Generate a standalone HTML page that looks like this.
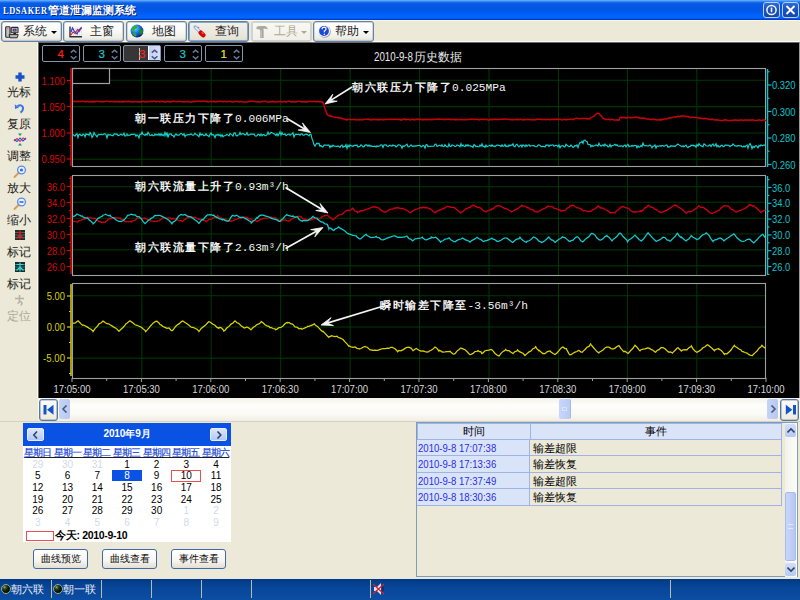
<!DOCTYPE html>
<html><head><meta charset="utf-8">
<style>
*{box-sizing:border-box}
html,body{margin:0;padding:0}
body{width:800px;height:600px;overflow:hidden;position:relative;background:#ece9d8;font-family:"Liberation Sans",sans-serif;font-size:12px;color:#000}
.a{position:absolute}
#title{left:0;top:0;width:800px;height:21px;background:linear-gradient(#6cb0ff 0px,#4c9cff 1px,#1c72f2 2px,#0a5ce4 3.5px,#0558e0 6px,#0058ea 11px,#0062fa 15px,#0068ff 18px,#0044dc 19px,#0034c4 20px,#fff6dc 20px,#fff6dc 21px)}
#title .t{left:3px;top:3px;color:#fff;font:bold 10.5px "Liberation Serif",serif;letter-spacing:-0.9px;text-shadow:1px 1px 0 #0a1f70;white-space:nowrap;line-height:14px}
#title .t .lt{display:inline-block;font-size:11px;letter-spacing:0.8px;transform:scaleX(0.76);transform-origin:0 0;width:44.5px;vertical-align:top}
#title .t .c{font-family:"Liberation Sans",sans-serif;font-size:10.5px;letter-spacing:0}
.tb{border:1px solid #3c6aa8;border-radius:3px;}
.cap{width:17px;height:16px;top:2px;border:1px solid #b8cff4;border-radius:3px;background:linear-gradient(#2d6ad8,#1a52c0 50%,#1446aa)}
.btn{top:20.5px;height:21px;border:1px solid #6582a2;border-radius:3px;box-shadow:inset 0 0 0 0.5px #9fb4cc;background:linear-gradient(#ffffff 0%,#fbfbf9 40%,#eeede6 85%,#dcd8cc 100%);}
.btn .l{position:absolute;top:1.5px;font-size:12px;color:#1a1a1a;white-space:nowrap}
.dd{position:absolute;top:9px;width:0;height:0;border-left:3px solid transparent;border-right:3px solid transparent;border-top:3px solid #000}
.lp{left:0;width:38px;text-align:center;font-size:12px;color:#1a1a1a;white-space:nowrap}
.spin{top:45px;width:38px;height:17px;border:1.5px solid #8494aa;border-radius:2px;background:#000}
.spin .v{position:absolute;right:15px;top:0.5px;font-size:11.5px;line-height:15px;font-weight:normal;-webkit-text-stroke:0.2px currentColor}
.spin svg{position:absolute;left:27px;top:3px}
#chart{left:38px;top:42px;width:762px;height:356px;background:#000;border-left:1px solid #6a6a6a;border-top:1px solid #6a6a6a;border-right:1px solid #9a9a9a}
.cal{left:23px;top:423px;width:208px;height:119px;background:#fff}
.wd{top:445.5px;width:29.7px;text-align:center;font-size:10px;color:#1040d8;-webkit-text-stroke:0.15px #1040d8;text-decoration:underline;white-space:nowrap;letter-spacing:-1px;line-height:13px;text-indent:-1px}
.dt{width:29.7px;text-align:center;font-size:10px;line-height:11px;color:#000}
.g{color:#d2d9e8}
.bb{top:549px;width:55px;height:20px;border:1px solid #3f6aa6;border-radius:3px;background:linear-gradient(#ffffff,#f6f5f0 60%,#e2ded2);font-size:10px;text-align:center;line-height:18px;color:#111}
.tr{left:417px;width:365px;height:16.5px;border-bottom:1px solid #9fb4e4;border-right:1px solid #9fb4e4}
.tc1{position:absolute;left:0;top:0;width:113px;height:100%;background:#d9e4f8;border-right:1px solid #9fb4e4;color:#2a2ee6;font-size:11px;line-height:16px;padding-left:1px;white-space:nowrap}
.tc1 span{display:inline-block;transform:scaleX(0.87);transform-origin:0 0}
.tc2{position:absolute;left:114px;top:0;right:0;height:100%;background:#ece9d8;font-size:11px;line-height:16px;padding-left:2px}
#status{left:0;top:579px;width:800px;height:21px;background:linear-gradient(#003a84,#08469a 40%,#0b4ea2)}
.sep{top:580px;width:1px;height:18px;background:#b8bca8}
.led{top:584px;width:10px;height:10px;border-radius:50%;background:radial-gradient(circle at 32% 28%,#9ab090 0,#2a4a28 22%,#0a1c0a 50%,#040c04 80%);border:1px solid #a8a480}
.ann{color:#f4f4f4;font-size:10.5px;font-weight:bold;letter-spacing:1.5px;line-height:14px;white-space:nowrap;margin-top:-0.5px}
.ann .m{font-family:"Liberation Mono",monospace;font-size:11.2px;letter-spacing:0;font-weight:normal}
.st{top:582px;color:#eef0f6;font-size:11px;white-space:nowrap;letter-spacing:-0.2px}
</style></head><body>

<div id="title" class="a"><div class="a t"><span class="lt">LDSAKER</span><span class="c">管道泄漏监测系统</span></div>
 <div class="a cap" style="left:763px"><svg width="15" height="14" style="position:absolute;left:0;top:0"><circle cx="7.5" cy="7" r="4.6" fill="none" stroke="#f8f4e8" stroke-width="1.5"/><line x1="7.5" y1="4.6" x2="7.5" y2="9.2" stroke="#f8f4e8" stroke-width="1.6"/></svg></div>
 <div class="a cap" style="left:782px"><svg width="15" height="14" style="position:absolute;left:0;top:0"><path d="M3.5 3 L11.5 11 M11.5 3 L3.5 11" stroke="#fff" stroke-width="1.9"/></svg></div>
</div>

<!-- toolbar -->
<div class="a" style="left:0;top:41px;width:800px;height:1px;background:#fbfaf4"></div>
<div class="a btn" style="left:1px;width:61px">
 <svg class="a" style="left:3px;top:4.5px" width="14" height="13"><rect x="0.7" y="0.7" width="4.3" height="10.6" rx="0.8" fill="#c4c4c4" stroke="#2a2a2a" stroke-width="1.1"/><circle cx="2.6" cy="2.6" r="0.9" fill="#f080a0"/><rect x="6.2" y="1.4" width="6.8" height="5.4" rx="0.6" fill="#d4d4d4" stroke="#2a2a2a" stroke-width="1.1"/><rect x="7.6" y="2.6" width="4" height="3" fill="#6a2a9a"/><path d="M8.6 5.6 L9.6 3 L10.6 5.6Z" fill="#20c020"/><rect x="8.4" y="6.8" width="2.6" height="1.5" fill="#222"/><path d="M4 8.6 H13.2 L12.2 11.8 H5Z" fill="#b8b8b8" stroke="#2a2a2a" stroke-width="1"/></svg>
 <span class="l" style="left:21px">系统</span><span class="dd" style="left:49px"></span></div>
<div class="a btn" style="left:63px;width:61px">
 <svg class="a" style="left:4.5px;top:4.5px" width="14" height="12"><rect x="1" y="0.5" width="12" height="10" fill="#f4f4ee"/><path d="M2 3 H13 M2 6 H13 M2 9 H13" stroke="#c8c8c0" stroke-width="0.8" stroke-dasharray="1 1"/><path d="M1 0.5 V10.8 H13" stroke="#303030" stroke-width="1.4" fill="none"/><path d="M2 9 L4 6 L6 7.5 L8.5 3.5 L10.5 5 L12.5 1" stroke="#e02020" fill="none" stroke-width="1.2"/><path d="M2 6 L3.5 2 L5.5 5.5 L8 8 L10 4 L12.5 2" stroke="#2a3ae8" fill="none" stroke-width="1.2"/></svg>
 <span class="l" style="left:26px">主窗</span></div>
<div class="a btn" style="left:126px;width:61px">
 <svg class="a" style="left:3px;top:2.5px" width="14" height="14"><defs><radialGradient id="gl" cx="35%" cy="30%" r="75%"><stop offset="0" stop-color="#60e0ff"/><stop offset="0.5" stop-color="#1a70f0"/><stop offset="1" stop-color="#0a1a80"/></radialGradient></defs><circle cx="7" cy="7" r="6.4" fill="url(#gl)"/><path d="M1.5 5 Q3 1.5 7 1.2 Q8.5 2.5 6.5 4.5 Q4 5.5 3.5 7.5 Q2 7 1.5 5Z" fill="#30b030"/><path d="M2.5 9 Q5 8 6.5 10 Q7 12.5 5 12.8 Q3 11.5 2.5 9Z" fill="#2aa82a"/><path d="M9 6 Q11.5 4.5 13 6.5 Q13.2 9.5 11 11 Q9 9.5 9 6Z" fill="#1c901c"/><path d="M9.5 12.5 Q12 11.5 13 9" stroke="#001040" stroke-width="1" fill="none" opacity="0.6"/></svg>
 <span class="l" style="left:25px">地图</span></div>
<div class="a btn" style="left:188px;width:61px;border-color:#5f82a8;box-shadow:inset 0 0 0 1px #8aa6c6;background:linear-gradient(#f2f0e8,#ebe8de 60%,#e2dfd2)">
 <svg class="a" style="left:4px;top:3.5px" width="13" height="13"><path d="M2.2 2 L7.6 7.4" stroke="#8ab8e8" stroke-width="3.4" stroke-linecap="round"/><path d="M2.4 2.2 L7.4 7.2" stroke="#ffffff" stroke-width="1.2"/><path d="M5 1.8 L6.2 3" stroke="#e04040" stroke-width="1"/><path d="M7.8 7.8 L10.2 10.2" stroke="#d00808" stroke-width="4.6" stroke-linecap="round"/><path d="M8.6 7.2 L10.4 9" stroke="#ff6020" stroke-width="1.2"/></svg>
 <span class="l" style="left:26px">查询</span></div>
<div class="a btn" style="left:251px;width:61px;border-color:#d6d2c4;background:linear-gradient(#f9f8f3,#f1efe6)">
 <svg class="a" style="left:3px;top:3.5px" width="14" height="14"><path d="M1.5 2 Q3 0.8 6 1 H10 Q12.5 1.5 13 4.5 Q11.5 3.5 10 3.8 H8.5 V5 H4.5 V4.2 Q2.5 4.5 1.5 4 Z" fill="#a8a8a4"/><rect x="5.2" y="5" width="3.4" height="8" fill="#a4a4a0"/><path d="M6.2 5.5 V12.5" stroke="#d8d8d4" stroke-width="0.8"/></svg>
 <span class="l" style="left:22px;color:#aca899">工具</span><span class="dd" style="left:49px;border-top-color:#aca899"></span></div>
<div class="a btn" style="left:313px;width:61px">
 <svg class="a" style="left:3px;top:2.5px" width="15" height="15"><circle cx="7.6" cy="7.6" r="6.2" fill="#4a4a4a" opacity="0.55"/><circle cx="7" cy="7" r="6.1" fill="#f0f4ff"/><circle cx="7" cy="7" r="4.9" fill="#1c48d0"/><path d="M5 5.2 Q5.2 3.2 7.2 3.2 Q9.2 3.4 9 5.2 Q8.8 6.4 7.4 7 V8.3" stroke="#e8f0ff" stroke-width="1.3" fill="none"/><circle cx="7.3" cy="10.2" r="0.8" fill="#e8f0ff"/></svg>
 <span class="l" style="left:21px">帮助</span><span class="dd" style="left:49px"></span></div>

<!-- left panel -->
<div class="a" style="left:37px;top:42px;width:1px;height:356px;background:#fbfaf4"></div>
<svg class="a" style="left:14.5px;top:71.5px" width="10" height="10"><path d="M3.3 0.5 H6.7 V3.3 H9.5 V6.7 H6.7 V9.5 H3.3 V6.7 H0.5 V3.3 H3.3Z" fill="#1a50c8"/></svg>
<div class="a lp" style="top:84px">光标</div>
<svg class="a" style="left:14px;top:103px" width="11" height="11"><path d="M3.5 3.2 Q6.5 1 8.6 3.6 Q10.2 6.6 6.5 9.6" fill="none" stroke="#3a74e8" stroke-width="2"/><path d="M0.8 1.2 L5 4.6 L1 6Z" fill="#3a74e8"/></svg>
<div class="a lp" style="top:115.5px">复原</div>
<svg class="a" style="left:12.5px;top:133px" width="14" height="13"><path d="M1 8 L4 5.5 L7 8.5 L10 5 L13 6.5" stroke="#e03838" fill="none" stroke-width="1.1"/><path d="M1 6.5 L4 8.5 L7 5 L10 8 L13 5" stroke="#3050e0" fill="none" stroke-width="1.1"/><path d="M5 0.5 L7 3 L9 0.5Z M5 12.5 L7 10 L9 12.5Z" fill="#109880"/></svg>
<div class="a lp" style="top:148px">调整</div>
<svg class="a" style="left:13px;top:165px" width="14" height="13"><path d="M1.5 12 L5.5 8" stroke="#d8a040" stroke-width="1.8" stroke-linecap="round"/><circle cx="8.5" cy="5" r="3.9" fill="#e8f2ff" stroke="#5a8ae8" stroke-width="1.3"/><circle cx="8.5" cy="5" r="1.6" fill="#3a6ae0"/></svg>
<div class="a lp" style="top:180px">放大</div>
<svg class="a" style="left:13px;top:197px" width="14" height="13"><path d="M1.5 12 L5.5 8" stroke="#d8a040" stroke-width="1.8" stroke-linecap="round"/><circle cx="8.5" cy="5" r="3.9" fill="#e8f2ff" stroke="#5a8ae8" stroke-width="1.3"/><path d="M6.5 5 H10.5" stroke="#3a6ae0" stroke-width="1.6"/></svg>
<div class="a lp" style="top:212px">缩小</div>
<svg class="a" style="left:14.5px;top:230px" width="10" height="10"><rect x="0" y="0" width="10" height="10" fill="#1c2c2c"/><path d="M0 2.5 H10 M0 5 H10 M0 7.5 H10" stroke="#3a8a80" stroke-width="0.8"/><path d="M1.5 2.5 H8.5 M5 0.5 V9.5 M1.5 8.5 L5 5 L8.5 8.5" stroke="#e02020" stroke-width="1.2" fill="none"/></svg>
<div class="a lp" style="top:244px">标记</div>
<svg class="a" style="left:14.5px;top:262px" width="10" height="10"><rect x="0" y="0" width="10" height="10" fill="#1c2c2c"/><path d="M0 2.5 H10 M0 5 H10 M0 7.5 H10" stroke="#3a8a80" stroke-width="0.8"/><path d="M1.5 2.5 H8.5 M5 0.5 V9.5 M1.5 8.5 L5 5 L8.5 8.5" stroke="#30d8e0" stroke-width="1.2" fill="none"/></svg>
<div class="a lp" style="top:276px">标记</div>
<svg class="a" style="left:13px;top:293.5px" width="13" height="13"><path d="M2 4.5 H11 M6.5 1 V7 Q6.5 9 4.5 9.5 M6.5 7 Q8.5 7.5 9 9.5 L8 11.5" stroke="#b4b0a4" stroke-width="1.5" fill="none"/></svg>
<div class="a lp" style="top:308px;color:#aca899">定位</div>

<!-- chart -->
<div id="chart" class="a"></div>
<svg style="position:absolute;left:0;top:0" width="800" height="600" viewBox="0 0 800 600" font-family="Liberation Sans, sans-serif" font-size="11">
<line x1="73" y1="80.3" x2="766" y2="80.3" stroke="#003800" stroke-width="1.05"/>
<line x1="73" y1="106.6" x2="766" y2="106.6" stroke="#003800" stroke-width="1.05"/>
<line x1="73" y1="132.9" x2="766" y2="132.9" stroke="#003800" stroke-width="1.05"/>
<line x1="73" y1="159.2" x2="766" y2="159.2" stroke="#003800" stroke-width="1.05"/>
<line x1="141.8" y1="68" x2="141.8" y2="166" stroke="#003800" stroke-width="1.05"/>
<line x1="211.2" y1="68" x2="211.2" y2="166" stroke="#003800" stroke-width="1.05"/>
<line x1="280.7" y1="68" x2="280.7" y2="166" stroke="#003800" stroke-width="1.05"/>
<line x1="350.1" y1="68" x2="350.1" y2="166" stroke="#003800" stroke-width="1.05"/>
<line x1="419.6" y1="68" x2="419.6" y2="166" stroke="#003800" stroke-width="1.05"/>
<line x1="489.0" y1="68" x2="489.0" y2="166" stroke="#003800" stroke-width="1.05"/>
<line x1="558.5" y1="68" x2="558.5" y2="166" stroke="#003800" stroke-width="1.05"/>
<line x1="627.4" y1="68" x2="627.4" y2="166" stroke="#003800" stroke-width="1.05"/>
<line x1="696.8" y1="68" x2="696.8" y2="166" stroke="#003800" stroke-width="1.05"/>
<rect x="72.5" y="68.5" width="693" height="98" fill="none" stroke="#a0a0a0" stroke-width="1.1"/>
<line x1="73" y1="186.7" x2="766" y2="186.7" stroke="#003800" stroke-width="1.05"/>
<line x1="73" y1="202.3" x2="766" y2="202.3" stroke="#003800" stroke-width="1.05"/>
<line x1="73" y1="218.2" x2="766" y2="218.2" stroke="#003800" stroke-width="1.05"/>
<line x1="73" y1="234" x2="766" y2="234" stroke="#003800" stroke-width="1.05"/>
<line x1="73" y1="249.8" x2="766" y2="249.8" stroke="#003800" stroke-width="1.05"/>
<line x1="73" y1="265.7" x2="766" y2="265.7" stroke="#003800" stroke-width="1.05"/>
<line x1="141.8" y1="175" x2="141.8" y2="275" stroke="#003800" stroke-width="1.05"/>
<line x1="211.2" y1="175" x2="211.2" y2="275" stroke="#003800" stroke-width="1.05"/>
<line x1="280.7" y1="175" x2="280.7" y2="275" stroke="#003800" stroke-width="1.05"/>
<line x1="350.1" y1="175" x2="350.1" y2="275" stroke="#003800" stroke-width="1.05"/>
<line x1="419.6" y1="175" x2="419.6" y2="275" stroke="#003800" stroke-width="1.05"/>
<line x1="489.0" y1="175" x2="489.0" y2="275" stroke="#003800" stroke-width="1.05"/>
<line x1="558.5" y1="175" x2="558.5" y2="275" stroke="#003800" stroke-width="1.05"/>
<line x1="627.4" y1="175" x2="627.4" y2="275" stroke="#003800" stroke-width="1.05"/>
<line x1="696.8" y1="175" x2="696.8" y2="275" stroke="#003800" stroke-width="1.05"/>
<rect x="72.5" y="175.5" width="693" height="100" fill="none" stroke="#a0a0a0" stroke-width="1.1"/>
<line x1="73" y1="295.8" x2="766" y2="295.8" stroke="#003800" stroke-width="1.05"/>
<line x1="73" y1="327" x2="766" y2="327" stroke="#003800" stroke-width="1.05"/>
<line x1="73" y1="358.2" x2="766" y2="358.2" stroke="#003800" stroke-width="1.05"/>
<line x1="141.8" y1="283" x2="141.8" y2="378" stroke="#003800" stroke-width="1.05"/>
<line x1="211.2" y1="283" x2="211.2" y2="378" stroke="#003800" stroke-width="1.05"/>
<line x1="280.7" y1="283" x2="280.7" y2="378" stroke="#003800" stroke-width="1.05"/>
<line x1="350.1" y1="283" x2="350.1" y2="378" stroke="#003800" stroke-width="1.05"/>
<line x1="419.6" y1="283" x2="419.6" y2="378" stroke="#003800" stroke-width="1.05"/>
<line x1="489.0" y1="283" x2="489.0" y2="378" stroke="#003800" stroke-width="1.05"/>
<line x1="558.5" y1="283" x2="558.5" y2="378" stroke="#003800" stroke-width="1.05"/>
<line x1="627.4" y1="283" x2="627.4" y2="378" stroke="#003800" stroke-width="1.05"/>
<line x1="696.8" y1="283" x2="696.8" y2="378" stroke="#003800" stroke-width="1.05"/>
<rect x="72.5" y="283.5" width="693" height="95" fill="none" stroke="#a0a0a0" stroke-width="1.1"/>
<rect x="72.5" y="68.5" width="37" height="15" fill="#000" stroke="#a0a0a0" stroke-width="1.2"/>
<line x1="71" y1="68" x2="71" y2="166" stroke="#d80808" stroke-width="1.5"/>
<line x1="67" y1="80.5" x2="71" y2="80.5" stroke="#d80808" stroke-width="1.2"/>
<text x="41.4" y="84.5" textLength="23.6" lengthAdjust="spacingAndGlyphs" fill="#d80808">1.100</text>
<line x1="67" y1="106.5" x2="71" y2="106.5" stroke="#d80808" stroke-width="1.2"/>
<text x="41.4" y="110.5" textLength="23.6" lengthAdjust="spacingAndGlyphs" fill="#d80808">1.050</text>
<line x1="67" y1="133" x2="71" y2="133" stroke="#d80808" stroke-width="1.2"/>
<text x="41.4" y="137" textLength="23.6" lengthAdjust="spacingAndGlyphs" fill="#d80808">1.000</text>
<line x1="67" y1="159" x2="71" y2="159" stroke="#d80808" stroke-width="1.2"/>
<text x="41.4" y="163" textLength="23.6" lengthAdjust="spacingAndGlyphs" fill="#d80808">0.950</text>
<line x1="69" y1="93.5" x2="71" y2="93.5" stroke="#d80808" stroke-width="1.2"/>
<line x1="69" y1="119.5" x2="71" y2="119.5" stroke="#d80808" stroke-width="1.2"/>
<line x1="69" y1="145.5" x2="71" y2="145.5" stroke="#d80808" stroke-width="1.2"/>
<line x1="767.5" y1="69" x2="767.5" y2="167" stroke="#10c0c8" stroke-width="1.5"/>
<line x1="767.5" y1="85" x2="771.5" y2="85" stroke="#10c0c8" stroke-width="1.2"/>
<text x="772.0" y="89" textLength="23.6" lengthAdjust="spacingAndGlyphs" fill="#10c0c8">0.320</text>
<line x1="767.5" y1="111.5" x2="771.5" y2="111.5" stroke="#10c0c8" stroke-width="1.2"/>
<text x="772.0" y="115.5" textLength="23.6" lengthAdjust="spacingAndGlyphs" fill="#10c0c8">0.300</text>
<line x1="767.5" y1="138" x2="771.5" y2="138" stroke="#10c0c8" stroke-width="1.2"/>
<text x="772.0" y="142" textLength="23.6" lengthAdjust="spacingAndGlyphs" fill="#10c0c8">0.280</text>
<line x1="767.5" y1="164.5" x2="771.5" y2="164.5" stroke="#10c0c8" stroke-width="1.2"/>
<text x="772.0" y="168.5" textLength="23.6" lengthAdjust="spacingAndGlyphs" fill="#10c0c8">0.260</text>
<line x1="767.5" y1="71.75" x2="769.5" y2="71.75" stroke="#10c0c8" stroke-width="1.2"/>
<line x1="767.5" y1="98.25" x2="769.5" y2="98.25" stroke="#10c0c8" stroke-width="1.2"/>
<line x1="767.5" y1="124.75" x2="769.5" y2="124.75" stroke="#10c0c8" stroke-width="1.2"/>
<line x1="767.5" y1="151.25" x2="769.5" y2="151.25" stroke="#10c0c8" stroke-width="1.2"/>
<line x1="71" y1="176" x2="71" y2="274" stroke="#d80808" stroke-width="1.5"/>
<line x1="67" y1="186.5" x2="71" y2="186.5" stroke="#d80808" stroke-width="1.2"/>
<text x="46.75" y="190.5" textLength="18.250000000000004" lengthAdjust="spacingAndGlyphs" fill="#d80808">36.0</text>
<line x1="67" y1="202.5" x2="71" y2="202.5" stroke="#d80808" stroke-width="1.2"/>
<text x="46.75" y="206.5" textLength="18.250000000000004" lengthAdjust="spacingAndGlyphs" fill="#d80808">34.0</text>
<line x1="67" y1="218.5" x2="71" y2="218.5" stroke="#d80808" stroke-width="1.2"/>
<text x="46.75" y="222.5" textLength="18.250000000000004" lengthAdjust="spacingAndGlyphs" fill="#d80808">32.0</text>
<line x1="67" y1="234.5" x2="71" y2="234.5" stroke="#d80808" stroke-width="1.2"/>
<text x="46.75" y="238.5" textLength="18.250000000000004" lengthAdjust="spacingAndGlyphs" fill="#d80808">30.0</text>
<line x1="67" y1="250.5" x2="71" y2="250.5" stroke="#d80808" stroke-width="1.2"/>
<text x="46.75" y="254.5" textLength="18.250000000000004" lengthAdjust="spacingAndGlyphs" fill="#d80808">28.0</text>
<line x1="67" y1="266.5" x2="71" y2="266.5" stroke="#d80808" stroke-width="1.2"/>
<text x="46.75" y="270.5" textLength="18.250000000000004" lengthAdjust="spacingAndGlyphs" fill="#d80808">26.0</text>
<line x1="69" y1="178.5" x2="71" y2="178.5" stroke="#d80808" stroke-width="1.2"/>
<line x1="69" y1="194.5" x2="71" y2="194.5" stroke="#d80808" stroke-width="1.2"/>
<line x1="69" y1="210.5" x2="71" y2="210.5" stroke="#d80808" stroke-width="1.2"/>
<line x1="69" y1="226.5" x2="71" y2="226.5" stroke="#d80808" stroke-width="1.2"/>
<line x1="69" y1="242.5" x2="71" y2="242.5" stroke="#d80808" stroke-width="1.2"/>
<line x1="69" y1="258.5" x2="71" y2="258.5" stroke="#d80808" stroke-width="1.2"/>
<line x1="767.5" y1="176" x2="767.5" y2="275" stroke="#10c0c8" stroke-width="1.5"/>
<line x1="767.5" y1="187.5" x2="771.5" y2="187.5" stroke="#10c0c8" stroke-width="1.2"/>
<text x="772.0" y="191.5" textLength="18.250000000000004" lengthAdjust="spacingAndGlyphs" fill="#10c0c8">36.0</text>
<line x1="767.5" y1="203.3" x2="771.5" y2="203.3" stroke="#10c0c8" stroke-width="1.2"/>
<text x="772.0" y="207.3" textLength="18.250000000000004" lengthAdjust="spacingAndGlyphs" fill="#10c0c8">34.0</text>
<line x1="767.5" y1="219.1" x2="771.5" y2="219.1" stroke="#10c0c8" stroke-width="1.2"/>
<text x="772.0" y="223.1" textLength="18.250000000000004" lengthAdjust="spacingAndGlyphs" fill="#10c0c8">32.0</text>
<line x1="767.5" y1="234.9" x2="771.5" y2="234.9" stroke="#10c0c8" stroke-width="1.2"/>
<text x="772.0" y="238.9" textLength="18.250000000000004" lengthAdjust="spacingAndGlyphs" fill="#10c0c8">30.0</text>
<line x1="767.5" y1="250.7" x2="771.5" y2="250.7" stroke="#10c0c8" stroke-width="1.2"/>
<text x="772.0" y="254.7" textLength="18.250000000000004" lengthAdjust="spacingAndGlyphs" fill="#10c0c8">28.0</text>
<line x1="767.5" y1="266.5" x2="771.5" y2="266.5" stroke="#10c0c8" stroke-width="1.2"/>
<text x="772.0" y="270.5" textLength="18.250000000000004" lengthAdjust="spacingAndGlyphs" fill="#10c0c8">26.0</text>
<line x1="767.5" y1="179.6" x2="769.5" y2="179.6" stroke="#10c0c8" stroke-width="1.2"/>
<line x1="767.5" y1="195.4" x2="769.5" y2="195.4" stroke="#10c0c8" stroke-width="1.2"/>
<line x1="767.5" y1="211.20000000000002" x2="769.5" y2="211.20000000000002" stroke="#10c0c8" stroke-width="1.2"/>
<line x1="767.5" y1="227.00000000000003" x2="769.5" y2="227.00000000000003" stroke="#10c0c8" stroke-width="1.2"/>
<line x1="767.5" y1="242.80000000000004" x2="769.5" y2="242.80000000000004" stroke="#10c0c8" stroke-width="1.2"/>
<line x1="767.5" y1="258.6" x2="769.5" y2="258.6" stroke="#10c0c8" stroke-width="1.2"/>
<line x1="767.5" y1="274.40000000000003" x2="769.5" y2="274.40000000000003" stroke="#10c0c8" stroke-width="1.2"/>
<line x1="71" y1="284" x2="71" y2="376" stroke="#d8d010" stroke-width="1.5"/>
<line x1="67" y1="296" x2="71" y2="296" stroke="#d8d010" stroke-width="1.2"/>
<text x="46.75" y="300" textLength="18.250000000000004" lengthAdjust="spacingAndGlyphs" fill="#d8d010">5.00</text>
<line x1="67" y1="327" x2="71" y2="327" stroke="#d8d010" stroke-width="1.2"/>
<text x="46.75" y="331" textLength="18.250000000000004" lengthAdjust="spacingAndGlyphs" fill="#d8d010">0.00</text>
<line x1="67" y1="358" x2="71" y2="358" stroke="#d8d010" stroke-width="1.2"/>
<text x="43.099999999999994" y="362" textLength="21.900000000000002" lengthAdjust="spacingAndGlyphs" fill="#d8d010">-5.00</text>
<line x1="69" y1="311.5" x2="71" y2="311.5" stroke="#d8d010" stroke-width="1.2"/>
<line x1="69" y1="342.5" x2="71" y2="342.5" stroke="#d8d010" stroke-width="1.2"/>
<line x1="69" y1="373.5" x2="71" y2="373.5" stroke="#d8d010" stroke-width="1.2"/>
<line x1="72.0" y1="378" x2="72.0" y2="382" stroke="#a0a0a0" stroke-width="1"/>
<line x1="106.7" y1="378" x2="106.7" y2="381" stroke="#a0a0a0" stroke-width="1"/>
<text x="53.5" y="393" textLength="37" lengthAdjust="spacingAndGlyphs" fill="#d8d8d8">17:05:00</text>
<line x1="141.4" y1="378" x2="141.4" y2="382" stroke="#a0a0a0" stroke-width="1"/>
<line x1="176.1" y1="378" x2="176.1" y2="381" stroke="#a0a0a0" stroke-width="1"/>
<text x="122.9" y="393" textLength="37" lengthAdjust="spacingAndGlyphs" fill="#d8d8d8">17:05:30</text>
<line x1="210.8" y1="378" x2="210.8" y2="382" stroke="#a0a0a0" stroke-width="1"/>
<line x1="245.5" y1="378" x2="245.5" y2="381" stroke="#a0a0a0" stroke-width="1"/>
<text x="192.3" y="393" textLength="37" lengthAdjust="spacingAndGlyphs" fill="#d8d8d8">17:06:00</text>
<line x1="280.2" y1="378" x2="280.2" y2="382" stroke="#a0a0a0" stroke-width="1"/>
<line x1="314.9" y1="378" x2="314.9" y2="381" stroke="#a0a0a0" stroke-width="1"/>
<text x="261.7" y="393" textLength="37" lengthAdjust="spacingAndGlyphs" fill="#d8d8d8">17:06:30</text>
<line x1="349.6" y1="378" x2="349.6" y2="382" stroke="#a0a0a0" stroke-width="1"/>
<line x1="384.3" y1="378" x2="384.3" y2="381" stroke="#a0a0a0" stroke-width="1"/>
<text x="331.1" y="393" textLength="37" lengthAdjust="spacingAndGlyphs" fill="#d8d8d8">17:07:00</text>
<line x1="419.0" y1="378" x2="419.0" y2="382" stroke="#a0a0a0" stroke-width="1"/>
<line x1="453.7" y1="378" x2="453.7" y2="381" stroke="#a0a0a0" stroke-width="1"/>
<text x="400.5" y="393" textLength="37" lengthAdjust="spacingAndGlyphs" fill="#d8d8d8">17:07:30</text>
<line x1="488.4" y1="378" x2="488.4" y2="382" stroke="#a0a0a0" stroke-width="1"/>
<line x1="523.1" y1="378" x2="523.1" y2="381" stroke="#a0a0a0" stroke-width="1"/>
<text x="469.9" y="393" textLength="37" lengthAdjust="spacingAndGlyphs" fill="#d8d8d8">17:08:00</text>
<line x1="557.8" y1="378" x2="557.8" y2="382" stroke="#a0a0a0" stroke-width="1"/>
<line x1="592.5" y1="378" x2="592.5" y2="381" stroke="#a0a0a0" stroke-width="1"/>
<text x="539.3" y="393" textLength="37" lengthAdjust="spacingAndGlyphs" fill="#d8d8d8">17:08:30</text>
<line x1="627.2" y1="378" x2="627.2" y2="382" stroke="#a0a0a0" stroke-width="1"/>
<line x1="661.9" y1="378" x2="661.9" y2="381" stroke="#a0a0a0" stroke-width="1"/>
<text x="608.7" y="393" textLength="37" lengthAdjust="spacingAndGlyphs" fill="#d8d8d8">17:09:00</text>
<line x1="696.6" y1="378" x2="696.6" y2="382" stroke="#a0a0a0" stroke-width="1"/>
<line x1="731.3" y1="378" x2="731.3" y2="381" stroke="#a0a0a0" stroke-width="1"/>
<text x="678.1" y="393" textLength="37" lengthAdjust="spacingAndGlyphs" fill="#d8d8d8">17:09:30</text>
<line x1="766.0" y1="378" x2="766.0" y2="382" stroke="#a0a0a0" stroke-width="1"/>
<text x="747.5" y="393" textLength="37" lengthAdjust="spacingAndGlyphs" fill="#d8d8d8">17:10:00</text>
<polyline points="73.0,101.4 74.0,101.3 75.0,101.7 76.0,101.2 77.0,101.6 78.0,101.5 79.0,101.2 80.0,101.6 81.0,101.2 82.0,101.5 83.0,101.2 84.0,101.2 85.0,101.5 86.0,101.9 87.0,101.3 88.0,101.4 89.0,101.7 90.0,102.0 91.0,101.7 92.0,101.5 93.0,102.0 94.0,101.2 95.0,101.9 96.0,101.4 97.0,101.3 98.0,101.3 99.0,101.4 100.0,101.9 101.0,101.3 102.0,101.7 103.0,101.7 104.0,101.5 105.0,101.6 106.0,101.2 107.0,101.2 108.0,101.3 109.0,101.8 110.0,101.5 111.0,101.4 112.0,101.7 113.0,101.6 114.0,101.4 115.0,101.9 116.0,101.8 117.0,101.4 118.0,101.7 119.0,101.6 120.0,101.9 121.0,101.8 122.0,101.4 123.0,102.0 124.0,101.3 125.0,101.5 126.0,101.8 127.0,101.3 128.0,101.6 129.0,101.2 130.0,101.8 131.0,101.8 132.0,101.7 133.0,101.9 134.0,101.4 135.0,101.8 136.0,101.7 137.0,101.7 138.0,101.6 139.0,101.9 140.0,102.0 141.0,101.6 142.0,101.7 143.0,101.2 144.0,101.8 145.0,101.7 146.0,102.0 147.0,101.9 148.0,101.4 149.0,101.5 150.0,101.8 151.0,101.2 152.0,101.6 153.0,101.3 154.0,101.3 155.0,101.2 156.0,101.8 157.0,101.3 158.0,101.4 159.0,101.5 160.0,101.9 161.0,101.2 162.0,101.6 163.0,101.6 164.0,101.9 165.0,101.9 166.0,101.9 167.0,101.4 168.0,101.5 169.0,101.5 170.0,101.9 171.0,102.0 172.0,101.3 173.0,101.3 174.0,101.4 175.0,101.4 176.0,101.6 177.0,101.7 178.0,101.4 179.0,101.2 180.0,101.5 181.0,101.5 182.0,101.7 183.0,102.0 184.0,101.8 185.0,101.6 186.0,101.7 187.0,101.8 188.0,101.2 189.0,102.0 190.0,101.9 191.0,101.9 192.0,101.9 193.0,101.5 194.0,101.5 195.0,101.2 196.0,101.7 197.0,101.2 198.0,101.2 199.0,101.3 200.0,101.3 201.0,101.5 202.0,101.2 203.0,101.2 204.0,101.3 205.0,101.2 206.0,101.5 207.0,101.2 208.0,101.9 209.0,101.7 210.0,101.3 211.0,101.4 212.0,101.5 213.0,101.5 214.0,101.3 215.0,101.9 216.0,102.0 217.0,101.6 218.0,101.6 219.0,101.2 220.0,101.2 221.0,101.5 222.0,101.4 223.0,101.9 224.0,101.3 225.0,101.2 226.0,102.0 227.0,101.6 228.0,101.3 229.0,101.6 230.0,101.2 231.0,101.6 232.0,102.0 233.0,101.9 234.0,101.8 235.0,101.4 236.0,101.5 237.0,101.3 238.0,101.8 239.0,101.6 240.0,101.9 241.0,101.4 242.0,101.4 243.0,101.9 244.0,102.0 245.0,101.9 246.0,101.9 247.0,101.9 248.0,101.8 249.0,101.4 250.0,101.6 251.0,101.5 252.0,101.2 253.0,101.2 254.0,101.4 255.0,101.4 256.0,101.8 257.0,102.0 258.0,101.6 259.0,102.0 260.0,102.0 261.0,102.0 262.0,101.5 263.0,101.3 264.0,101.4 265.0,101.3 266.0,101.3 267.0,101.7 268.0,102.0 269.0,101.9 270.0,101.6 271.0,101.7 272.0,101.9 273.0,101.2 274.0,101.7 275.0,102.0 276.0,101.9 277.0,101.8 278.0,101.6 279.0,101.3 280.0,101.9 281.0,101.4 282.0,101.9 283.0,102.0 284.0,101.5 285.0,101.5 286.0,102.0 287.0,101.8 288.0,101.3 289.0,101.3 290.0,101.3 291.0,102.0 292.0,101.9 293.0,101.3 294.0,101.9 295.0,102.0 296.0,101.7 297.0,101.5 298.0,101.6 299.0,101.3 300.0,101.2 301.0,102.0 302.0,101.7 303.0,101.6 304.0,102.0 305.0,101.5 306.0,101.9 307.0,101.9 308.0,101.3 309.0,101.4 310.0,101.4 311.0,101.4 312.0,101.7 313.0,101.4 314.0,101.5 315.0,101.3 316.0,102.0 317.0,101.5 318.0,101.6 319.0,101.7 320.0,102.0 321.0,101.5 322.0,102.0 323.0,102.5 324.0,105.0 325.0,108.4 326.0,111.3 327.0,114.1 328.0,115.3 329.0,115.4 330.0,116.3 331.0,115.9 332.0,116.4 333.0,116.8 334.0,116.9 335.0,116.9 336.0,117.3 337.0,117.5 338.0,117.9 339.0,117.5 340.0,118.1 341.0,118.1 342.0,118.3 343.0,118.9 344.0,118.9 345.0,119.6 346.0,119.7 347.0,119.9 348.0,119.4 349.0,119.6 350.0,119.5 351.0,119.5 352.0,119.7 353.0,119.5 354.0,119.5 355.0,119.5 356.0,119.9 357.0,119.7 358.0,119.8 359.0,119.9 360.0,119.3 361.0,119.6 362.0,119.9 363.0,119.8 364.0,119.2 365.0,119.2 366.0,119.4 367.0,119.1 368.0,119.3 369.0,119.1 370.0,119.7 371.0,119.8 372.0,119.9 373.0,119.2 374.0,119.7 375.0,119.6 376.0,119.2 377.0,119.8 378.0,119.9 379.0,119.2 380.0,119.9 381.0,119.4 382.0,119.5 383.0,119.9 384.0,119.8 385.0,119.2 386.0,119.4 387.0,119.5 388.0,119.4 389.0,119.2 390.0,119.3 391.0,119.7 392.0,119.1 393.0,119.5 394.0,119.4 395.0,119.1 396.0,119.3 397.0,119.6 398.0,119.5 399.0,119.1 400.0,119.9 401.0,119.8 402.0,119.9 403.0,119.1 404.0,119.3 405.0,119.1 406.0,119.8 407.0,119.3 408.0,119.2 409.0,119.4 410.0,119.9 411.0,119.8 412.0,119.3 413.0,119.2 414.0,119.9 415.0,119.6 416.0,119.7 417.0,119.1 418.0,119.1 419.0,119.7 420.0,119.4 421.0,119.1 422.0,119.9 423.0,119.6 424.0,119.8 425.0,119.1 426.0,119.8 427.0,119.1 428.0,119.8 429.0,119.5 430.0,119.4 431.0,119.5 432.0,119.9 433.0,119.3 434.0,119.2 435.0,119.5 436.0,119.3 437.0,119.1 438.0,119.2 439.0,119.1 440.0,119.2 441.0,119.3 442.0,119.3 443.0,119.7 444.0,119.3 445.0,119.5 446.0,119.2 447.0,119.4 448.0,119.1 449.0,119.3 450.0,119.1 451.0,119.7 452.0,119.5 453.0,119.2 454.0,119.5 455.0,119.9 456.0,119.1 457.0,119.8 458.0,119.4 459.0,119.5 460.0,119.8 461.0,119.4 462.0,119.5 463.0,119.7 464.0,119.9 465.0,119.4 466.0,119.8 467.0,119.7 468.0,119.6 469.0,119.4 470.0,119.4 471.0,119.1 472.0,119.2 473.0,119.1 474.0,119.7 475.0,119.3 476.0,119.2 477.0,119.1 478.0,119.8 479.0,119.8 480.0,119.7 481.0,119.3 482.0,119.3 483.0,119.3 484.0,119.5 485.0,119.2 486.0,119.5 487.0,119.3 488.0,119.9 489.0,119.9 490.0,119.5 491.0,119.3 492.0,119.9 493.0,119.3 494.0,119.4 495.0,119.1 496.0,119.4 497.0,119.5 498.0,119.5 499.0,119.2 500.0,119.5 501.0,119.1 502.0,119.3 503.0,119.1 504.0,119.4 505.0,119.1 506.0,119.1 507.0,119.3 508.0,119.3 509.0,119.6 510.0,119.5 511.0,119.7 512.0,119.6 513.0,119.7 514.0,119.8 515.0,119.4 516.0,119.3 517.0,119.9 518.0,119.2 519.0,119.7 520.0,119.6 521.0,119.1 522.0,119.8 523.0,119.9 524.0,119.6 525.0,119.7 526.0,119.8 527.0,119.2 528.0,119.5 529.0,119.5 530.0,119.8 531.0,119.8 532.0,119.8 533.0,119.6 534.0,119.9 535.0,119.7 536.0,119.7 537.0,119.3 538.0,119.1 539.0,119.2 540.0,119.4 541.0,119.1 542.0,119.8 543.0,119.6 544.0,119.6 545.0,119.6 546.0,119.7 547.0,119.5 548.0,119.1 549.0,119.8 550.0,119.7 551.0,119.5 552.0,119.5 553.0,119.6 554.0,119.1 555.0,119.7 556.0,119.3 557.0,119.1 558.0,119.3 559.0,119.7 560.0,119.2 561.0,119.7 562.0,119.9 563.0,119.5 564.0,119.4 565.0,119.5 566.0,119.7 567.0,119.7 568.0,119.6 569.0,119.6 570.0,119.1 571.0,119.2 572.0,119.3 573.0,119.7 574.0,119.3 575.0,118.7 576.0,118.2 577.0,118.2 578.0,118.4 579.0,118.8 580.0,118.8 581.0,118.8 582.0,118.4 583.0,118.6 584.0,118.6 585.0,118.6 586.0,118.3 587.0,119.0 588.0,118.3 589.0,119.0 590.0,119.0 591.0,117.4 592.0,117.1 593.0,116.7 594.0,116.1 595.0,114.9 596.0,114.0 597.0,113.3 598.0,113.2 599.0,113.6 600.0,114.9 601.0,115.6 602.0,117.0 603.0,118.4 604.0,118.7 605.0,119.4 606.0,119.2 607.0,119.6 608.0,119.6 609.0,119.2 610.0,119.9 611.0,119.6 612.0,119.3 613.0,119.4 614.0,119.9 615.0,120.0 616.0,119.9 617.0,119.9 618.0,120.2 619.0,120.2 620.0,117.8 621.0,117.1 622.0,117.7 623.0,117.8 624.0,117.2 625.0,117.9 626.0,117.7 627.0,117.9 628.0,117.3 629.0,117.4 630.0,117.4 631.0,117.9 632.0,117.6 633.0,117.4 634.0,117.4 635.0,117.3 636.0,117.1 637.0,117.1 638.0,117.8 639.0,117.3 640.0,118.4 641.0,117.9 642.0,118.0 643.0,118.3 644.0,118.1 645.0,118.4 646.0,119.0 647.0,119.0 648.0,119.1 649.0,119.0 650.0,119.4 651.0,119.5 652.0,119.2 653.0,119.5 654.0,119.0 655.0,119.7 656.0,119.6 657.0,119.9 658.0,119.9 659.0,119.7 660.0,119.6 661.0,120.2 662.0,119.3 663.0,119.4 664.0,119.1 665.0,118.8 666.0,119.0 667.0,119.0 668.0,118.2 669.0,118.3 670.0,117.8 671.0,117.9 672.0,117.5 673.0,117.1 674.0,116.9 675.0,116.7 676.0,117.2 677.0,116.6 678.0,116.1 679.0,116.6 680.0,116.4 681.0,116.1 682.0,115.9 683.0,116.0 684.0,116.1 685.0,116.4 686.0,116.3 687.0,116.5 688.0,116.6 689.0,117.0 690.0,117.4 691.0,117.4 692.0,117.2 693.0,117.3 694.0,117.5 695.0,117.5 696.0,117.6 697.0,117.4 698.0,117.7 699.0,118.5 700.0,117.8 701.0,118.3 702.0,118.5 703.0,118.8 704.0,118.3 705.0,118.5 706.0,118.6 707.0,118.8 708.0,119.0 709.0,119.5 710.0,119.6 711.0,119.7 712.0,119.0 713.0,119.1 714.0,119.9 715.0,120.1 716.0,119.9 717.0,120.3 718.0,119.8 719.0,120.1 720.0,120.6 721.0,120.5 722.0,120.5 723.0,120.6 724.0,120.0 725.0,119.8 726.0,119.9 727.0,120.2 728.0,120.4 729.0,120.6 730.0,120.4 731.0,120.3 732.0,120.4 733.0,120.2 734.0,120.2 735.0,119.8 736.0,120.5 737.0,120.0 738.0,120.6 739.0,120.3 740.0,120.0 741.0,119.9 742.0,120.0 743.0,120.3 744.0,120.4 745.0,119.9 746.0,119.8 747.0,120.2 748.0,120.3 749.0,120.1 750.0,120.0 751.0,120.3 752.0,119.8 753.0,120.0 754.0,120.2 755.0,120.6 756.0,120.3 757.0,120.5 758.0,120.2 759.0,120.0 760.0,120.0 761.0,120.6 762.0,120.4 763.0,120.0 764.0,119.8 765.0,120.2 766.0,120.4" fill="none" stroke="#c8000e" stroke-width="1.5"/>
<polyline points="73.0,134.6 74.0,135.2 75.0,136.1 76.0,134.5 77.0,133.7 78.0,137.7 79.0,134.4 80.0,134.2 81.0,135.4 82.0,135.8 83.0,134.1 84.0,134.6 85.0,136.9 86.0,133.8 87.0,134.6 88.0,134.1 89.0,135.3 90.0,132.5 91.0,134.1 92.0,137.4 93.0,135.9 94.0,132.5 95.0,134.3 96.0,135.4 97.0,136.8 98.0,134.9 99.0,134.4 100.0,134.7 101.0,134.2 102.0,134.6 103.0,134.7 104.0,133.8 105.0,133.8 106.0,134.5 107.0,137.9 108.0,134.4 109.0,135.0 110.0,134.6 111.0,135.3 112.0,135.4 113.0,135.7 114.0,134.0 115.0,133.7 116.0,134.4 117.0,134.0 118.0,135.6 119.0,135.4 120.0,134.8 121.0,134.1 122.0,135.1 123.0,134.9 124.0,133.2 125.0,136.1 126.0,135.8 127.0,134.0 128.0,135.7 129.0,134.9 130.0,135.4 131.0,134.3 132.0,134.3 133.0,134.3 134.0,134.1 135.0,134.3 136.0,136.3 137.0,134.8 138.0,135.5 139.0,138.0 140.0,134.2 141.0,134.5 142.0,132.1 143.0,134.5 144.0,134.7 145.0,135.4 146.0,133.9 147.0,135.1 148.0,132.3 149.0,133.8 150.0,135.7 151.0,135.5 152.0,134.5 153.0,135.6 154.0,135.7 155.0,134.0 156.0,135.1 157.0,134.3 158.0,135.2 159.0,133.8 160.0,135.6 161.0,133.7 162.0,135.5 163.0,134.6 164.0,135.8 165.0,132.5 166.0,135.6 167.0,132.3 168.0,137.6 169.0,134.1 170.0,134.1 171.0,133.8 172.0,135.4 173.0,135.5 174.0,137.0 175.0,135.0 176.0,133.9 177.0,135.2 178.0,135.1 179.0,135.1 180.0,134.1 181.0,133.4 182.0,134.0 183.0,135.3 184.0,133.8 185.0,136.6 186.0,135.0 187.0,135.1 188.0,134.6 189.0,134.6 190.0,134.7 191.0,133.8 192.0,134.8 193.0,135.4 194.0,134.7 195.0,133.2 196.0,134.5 197.0,134.8 198.0,135.7 199.0,136.6 200.0,133.2 201.0,135.3 202.0,134.1 203.0,134.8 204.0,135.7 205.0,135.4 206.0,133.8 207.0,135.4 208.0,135.7 209.0,136.8 210.0,134.3 211.0,132.9 212.0,135.1 213.0,134.4 214.0,135.4 215.0,137.6 216.0,134.7 217.0,135.2 218.0,134.3 219.0,135.6 220.0,134.5 221.0,136.5 222.0,134.7 223.0,136.8 224.0,135.8 225.0,135.7 226.0,135.3 227.0,134.2 228.0,135.1 229.0,135.9 230.0,133.4 231.0,134.4 232.0,134.9 233.0,136.1 234.0,132.9 235.0,132.6 236.0,135.4 237.0,136.0 238.0,135.0 239.0,134.8 240.0,132.4 241.0,134.6 242.0,133.8 243.0,133.7 244.0,134.1 245.0,135.1 246.0,134.6 247.0,132.6 248.0,135.3 249.0,134.9 250.0,134.7 251.0,133.9 252.0,134.1 253.0,134.3 254.0,134.0 255.0,135.7 256.0,136.1 257.0,135.7 258.0,134.4 259.0,134.4 260.0,135.7 261.0,134.1 262.0,135.7 263.0,134.6 264.0,134.5 265.0,135.7 266.0,135.6 267.0,134.7 268.0,132.0 269.0,134.4 270.0,133.8 271.0,132.3 272.0,132.8 273.0,133.2 274.0,133.8 275.0,134.5 276.0,135.5 277.0,133.8 278.0,135.7 279.0,133.9 280.0,131.9 281.0,135.1 282.0,132.5 283.0,134.4 284.0,134.5 285.0,133.8 286.0,135.7 287.0,135.0 288.0,134.3 289.0,134.0 290.0,135.3 291.0,134.2 292.0,133.9 293.0,132.7 294.0,137.0 295.0,134.8 296.0,134.1 297.0,134.5 298.0,134.3 299.0,134.3 300.0,135.2 301.0,133.9 302.0,133.9 303.0,135.2 304.0,135.1 305.0,134.6 306.0,134.1 307.0,134.4 308.0,134.9 309.0,135.9 310.0,134.3 311.0,134.4 312.0,138.6 313.0,141.3 314.0,144.4 315.0,146.1 316.0,144.3 317.0,143.0 318.0,143.9 319.0,143.3 320.0,146.3 321.0,145.5 322.0,146.8 323.0,146.8 324.0,145.1 325.0,145.1 326.0,145.0 327.0,145.4 328.0,144.9 329.0,145.3 330.0,147.6 331.0,145.8 332.0,146.8 333.0,145.2 334.0,146.2 335.0,146.1 336.0,146.2 337.0,146.6 338.0,146.0 339.0,146.5 340.0,147.4 341.0,145.6 342.0,145.0 343.0,147.4 344.0,146.2 345.0,146.7 346.0,144.7 347.0,148.4 348.0,145.1 349.0,146.8 350.0,144.9 351.0,145.9 352.0,145.8 353.0,146.5 354.0,145.6 355.0,145.2 356.0,145.6 357.0,145.0 358.0,147.0 359.0,146.6 360.0,146.2 361.0,144.9 362.0,145.6 363.0,146.8 364.0,146.8 365.0,145.1 366.0,144.9 367.0,145.1 368.0,146.3 369.0,145.0 370.0,146.5 371.0,145.6 372.0,146.4 373.0,146.4 374.0,146.4 375.0,146.2 376.0,146.9 377.0,145.8 378.0,146.5 379.0,146.1 380.0,145.8 381.0,144.9 382.0,145.0 383.0,147.5 384.0,145.0 385.0,144.8 386.0,144.9 387.0,146.0 388.0,146.6 389.0,145.7 390.0,145.2 391.0,145.9 392.0,146.2 393.0,144.9 394.0,145.9 395.0,145.4 396.0,147.0 397.0,146.3 398.0,145.0 399.0,144.8 400.0,145.0 401.0,145.8 402.0,148.2 403.0,145.9 404.0,146.5 405.0,145.6 406.0,144.9 407.0,144.2 408.0,146.7 409.0,146.9 410.0,145.8 411.0,144.8 412.0,146.1 413.0,146.6 414.0,145.7 415.0,146.4 416.0,145.7 417.0,145.9 418.0,145.3 419.0,145.6 420.0,145.3 421.0,146.8 422.0,146.4 423.0,145.4 424.0,146.0 425.0,148.1 426.0,144.8 427.0,144.7 428.0,146.7 429.0,146.1 430.0,146.7 431.0,146.1 432.0,146.2 433.0,146.2 434.0,146.2 435.0,144.3 436.0,144.1 437.0,146.5 438.0,145.9 439.0,145.4 440.0,145.4 441.0,146.1 442.0,144.8 443.0,146.5 444.0,146.7 445.0,144.7 446.0,146.0 447.0,146.9 448.0,146.9 449.0,143.9 450.0,146.2 451.0,146.6 452.0,145.0 453.0,145.3 454.0,145.7 455.0,146.7 456.0,146.3 457.0,145.0 458.0,145.3 459.0,145.8 460.0,146.7 461.0,143.7 462.0,146.1 463.0,144.9 464.0,146.3 465.0,146.6 466.0,144.8 467.0,146.0 468.0,144.7 469.0,146.1 470.0,145.6 471.0,146.4 472.0,146.4 473.0,147.4 474.0,144.5 475.0,145.4 476.0,146.7 477.0,146.2 478.0,146.7 479.0,146.7 480.0,145.0 481.0,146.4 482.0,143.9 483.0,146.6 484.0,146.2 485.0,147.4 486.0,145.1 487.0,146.7 488.0,146.0 489.0,145.7 490.0,145.3 491.0,146.4 492.0,144.9 493.0,146.4 494.0,146.0 495.0,146.6 496.0,145.7 497.0,145.1 498.0,145.1 499.0,145.5 500.0,145.6 501.0,146.5 502.0,144.9 503.0,146.4 504.0,146.0 505.0,144.5 506.0,146.6 507.0,146.0 508.0,146.7 509.0,144.9 510.0,146.0 511.0,145.0 512.0,145.4 513.0,143.8 514.0,146.6 515.0,146.8 516.0,144.8 517.0,144.2 518.0,145.9 519.0,146.8 520.0,145.6 521.0,145.1 522.0,146.9 523.0,144.8 524.0,145.5 525.0,146.7 526.0,144.8 527.0,146.3 528.0,145.4 529.0,144.7 530.0,146.3 531.0,145.7 532.0,145.7 533.0,145.6 534.0,145.5 535.0,146.5 536.0,146.7 537.0,146.7 538.0,145.0 539.0,144.9 540.0,145.5 541.0,146.4 542.0,146.7 543.0,146.2 544.0,146.5 545.0,146.9 546.0,145.0 547.0,145.3 548.0,145.0 549.0,146.5 550.0,145.1 551.0,145.4 552.0,145.0 553.0,144.8 554.0,146.2 555.0,145.8 556.0,145.3 557.0,145.5 558.0,146.9 559.0,144.9 560.0,147.9 561.0,146.1 562.0,145.8 563.0,145.7 564.0,146.8 565.0,146.8 566.0,144.3 567.0,145.2 568.0,146.0 569.0,146.7 570.0,146.4 571.0,145.0 572.0,146.1 573.0,147.4 574.0,146.7 575.0,145.5 576.0,146.1 577.0,144.9 578.0,147.5 579.0,144.6 580.0,142.5 581.0,142.7 582.0,141.2 583.0,143.4 584.0,140.2 585.0,140.1 586.0,141.2 587.0,141.5 588.0,144.5 589.0,144.5 590.0,144.5 591.0,146.8 592.0,145.4 593.0,146.5 594.0,145.7 595.0,145.7 596.0,144.9 597.0,145.3 598.0,146.0 599.0,143.2 600.0,145.2 601.0,146.2 602.0,145.6 603.0,144.7 604.0,146.2 605.0,144.1 606.0,145.4 607.0,145.4 608.0,146.9 609.0,146.7 610.0,144.4 611.0,146.8 612.0,145.6 613.0,145.5 614.0,144.9 615.0,144.2 616.0,145.6 617.0,144.6 618.0,146.1 619.0,146.2 620.0,145.9 621.0,146.1 622.0,145.8 623.0,146.8 624.0,145.4 625.0,145.0 626.0,146.8 627.0,145.3 628.0,144.2 629.0,146.6 630.0,146.0 631.0,146.3 632.0,145.3 633.0,146.2 634.0,145.6 635.0,145.5 636.0,145.4 637.0,147.8 638.0,145.8 639.0,147.3 640.0,146.8 641.0,145.4 642.0,146.6 643.0,143.1 644.0,145.5 645.0,145.8 646.0,145.5 647.0,145.8 648.0,146.2 649.0,145.6 650.0,145.0 651.0,146.0 652.0,147.9 653.0,146.1 654.0,146.2 655.0,144.9 656.0,148.1 657.0,146.0 658.0,146.4 659.0,146.0 660.0,145.7 661.0,146.3 662.0,145.6 663.0,145.5 664.0,146.4 665.0,145.8 666.0,145.1 667.0,145.0 668.0,147.4 669.0,146.6 670.0,146.8 671.0,145.6 672.0,146.2 673.0,145.9 674.0,146.1 675.0,146.5 676.0,145.6 677.0,144.8 678.0,144.0 679.0,144.9 680.0,145.6 681.0,146.0 682.0,146.8 683.0,145.7 684.0,146.9 685.0,145.9 686.0,145.1 687.0,146.9 688.0,147.7 689.0,146.5 690.0,146.7 691.0,145.0 692.0,145.8 693.0,145.1 694.0,146.1 695.0,145.5 696.0,147.2 697.0,144.7 698.0,145.9 699.0,143.7 700.0,145.1 701.0,145.9 702.0,146.1 703.0,146.9 704.0,143.9 705.0,144.5 706.0,145.8 707.0,146.0 708.0,146.1 709.0,145.2 710.0,144.8 711.0,146.6 712.0,144.8 713.0,144.0 714.0,146.0 715.0,145.7 716.0,143.8 717.0,146.7 718.0,145.4 719.0,146.8 720.0,146.8 721.0,145.6 722.0,145.2 723.0,146.6 724.0,146.4 725.0,145.1 726.0,145.1 727.0,145.3 728.0,145.0 729.0,145.5 730.0,146.6 731.0,145.6 732.0,145.5 733.0,143.9 734.0,145.0 735.0,145.9 736.0,145.9 737.0,146.4 738.0,145.5 739.0,145.6 740.0,146.0 741.0,145.7 742.0,146.6 743.0,146.8 744.0,146.0 745.0,146.9 746.0,145.6 747.0,145.0 748.0,148.1 749.0,144.9 750.0,143.6 751.0,145.2 752.0,148.6 753.0,146.4 754.0,147.5 755.0,146.3 756.0,145.6 757.0,146.4 758.0,147.9 759.0,145.5 760.0,146.2 761.0,144.8 762.0,145.7 763.0,145.6 764.0,144.9 765.0,145.3 766.0,145.2" fill="none" stroke="#10d2d0" stroke-width="1.15"/>
<polyline points="73.0,221.2 75.0,221.7 77.0,221.8 77.5,222.2 79.0,220.7 81.0,220.4 82.5,219.5 83.0,219.4 85.0,219.0 87.0,217.8 87.5,217.2 89.0,217.6 91.0,217.8 93.0,218.5 95.0,218.3 97.0,219.7 99.0,221.7 100.0,221.4 101.0,222.2 103.0,222.1 105.0,222.4 107.0,220.8 109.0,219.0 110.0,218.3 111.0,218.7 113.0,218.3 115.0,217.5 117.0,217.9 119.0,218.4 120.0,217.9 121.0,219.2 123.0,219.7 125.0,221.3 127.0,221.9 129.0,221.7 131.0,221.5 131.2,221.9 133.0,220.7 135.0,220.2 137.0,218.3 137.5,217.9 139.0,218.1 141.0,218.3 143.0,218.5 145.0,218.3 147.0,219.1 149.0,220.3 150.0,220.2 151.0,220.9 153.0,221.3 155.0,221.4 157.0,221.2 157.5,220.9 159.0,220.8 161.0,219.4 162.5,218.2 163.0,217.7 165.0,217.7 167.0,218.4 169.0,217.8 170.0,217.8 171.0,218.9 173.0,218.5 175.0,219.2 177.0,219.4 179.0,220.6 181.0,220.4 182.5,221.5 183.0,220.9 185.0,219.4 187.0,218.1 187.5,216.9 189.0,217.5 191.0,216.6 192.5,217.1 193.0,217.3 195.0,217.3 197.0,218.6 199.0,219.2 200.0,219.1 201.0,219.9 203.0,219.8 205.0,220.8 206.2,221.8 207.0,221.1 209.0,219.4 211.0,219.4 212.5,218.5 213.0,217.8 215.0,216.8 217.0,216.7 217.5,215.7 219.0,217.0 221.0,217.5 223.0,219.5 223.8,219.2 225.0,219.2 227.0,220.0 229.0,221.3 231.0,220.8 231.2,221.2 233.0,220.7 235.0,219.6 237.0,219.2 239.0,217.9 240.0,218.1 241.0,218.4 243.0,217.4 245.0,217.2 247.0,217.5 249.0,218.8 251.0,219.0 251.2,219.6 253.0,220.5 255.0,220.5 257.0,221.4 257.5,221.0 259.0,220.5 261.0,219.3 263.0,218.7 265.0,218.2 267.0,218.1 269.0,217.9 270.0,217.7 271.0,217.1 273.0,218.2 275.0,217.5 277.0,219.2 279.0,220.2 280.0,221.1 281.0,221.4 283.0,220.2 285.0,219.9 287.0,220.6 288.8,220.8 289.0,221.3 291.0,219.5 293.0,218.4 295.0,216.8 297.0,216.7 298.8,216.1 299.0,216.1 301.0,216.9 303.0,218.9 303.8,219.2 305.0,219.1 307.0,219.8 307.5,220.1 309.0,220.4 311.0,219.8 312.5,219.3 313.0,218.7 315.0,218.5 317.0,219.0 317.5,219.3 319.0,218.7 321.0,217.8 322.5,216.4 323.0,216.3 325.0,215.5 327.0,215.3 327.5,215.2 329.0,216.8 331.0,217.9 333.0,219.9 333.1,219.8 335.0,218.0 337.0,216.3 337.5,216.1 339.0,214.9 341.0,214.6 342.5,214.2 343.0,213.4 345.0,211.7 347.0,210.4 347.5,210.1 349.0,210.3 351.0,209.8 352.5,208.2 353.0,208.5 355.0,211.2 357.0,211.7 357.5,212.8 359.0,211.8 361.0,210.6 362.5,211.0 363.0,210.6 365.0,209.8 367.0,209.1 369.0,208.5 370.0,208.1 371.0,207.5 372.5,206.9 373.0,207.1 375.0,206.8 377.0,207.3 377.5,207.6 379.0,208.0 381.0,210.2 383.0,211.4 385.0,212.3 387.0,211.4 388.8,210.1 389.0,209.8 391.0,209.2 393.0,209.0 395.0,207.8 397.0,208.1 397.5,207.5 399.0,208.0 401.0,208.6 403.0,208.3 403.8,209.0 405.0,209.7 407.0,210.3 409.0,212.0 410.0,212.6 411.0,212.5 413.0,210.8 415.0,209.7 417.0,209.2 419.0,208.2 421.0,207.5 422.5,207.8 423.0,207.0 425.0,207.9 427.0,207.5 428.8,208.5 429.0,208.5 431.0,209.3 433.0,211.3 435.0,212.8 437.0,211.2 439.0,210.4 440.0,210.0 441.0,209.7 443.0,208.7 445.0,207.8 447.0,206.3 447.5,206.4 449.0,206.6 451.0,207.3 453.0,207.1 455.0,208.1 457.0,209.7 459.0,211.6 460.6,213.0 461.0,212.4 463.0,211.5 465.0,209.6 466.2,208.7 467.0,208.6 469.0,207.4 470.0,207.5 471.0,206.1 473.0,205.6 473.1,205.1 475.0,206.1 477.0,207.1 478.8,207.4 479.0,207.1 481.0,208.3 483.0,210.2 485.0,211.7 486.2,211.9 487.0,211.1 489.0,210.1 491.0,210.0 491.2,208.9 493.0,209.0 495.0,207.0 497.0,205.7 498.1,205.9 499.0,205.7 501.0,206.4 503.0,207.7 503.8,207.9 505.0,208.5 507.0,208.8 509.0,210.3 511.0,211.4 511.2,211.9 513.0,211.0 515.0,209.8 517.0,209.0 517.5,209.1 519.0,207.5 521.0,206.1 521.9,205.4 523.0,206.1 525.0,206.1 527.0,207.8 527.5,207.2 529.0,208.1 531.0,209.5 533.0,209.7 535.0,211.9 536.2,211.8 537.0,212.1 539.0,211.2 541.0,210.2 541.2,210.3 543.0,208.9 545.0,208.4 547.0,206.9 548.1,205.8 549.0,206.3 551.0,206.7 553.0,206.9 553.8,208.1 555.0,208.4 557.0,208.8 559.0,210.0 560.0,210.0 561.0,211.2 563.0,210.6 565.0,210.6 567.0,208.3 569.0,207.5 570.0,205.7 571.0,206.0 573.0,205.2 573.1,205.1 575.0,206.5 577.0,207.8 577.5,207.7 579.0,208.2 581.0,208.9 583.0,210.8 583.8,210.6 585.0,210.7 587.0,211.3 589.0,211.5 590.0,211.5 591.0,211.4 593.0,209.5 595.0,208.8 597.0,207.3 598.1,206.0 599.0,206.6 601.0,208.1 603.0,208.2 603.8,208.6 605.0,209.5 607.0,210.4 609.0,211.6 610.0,213.0 611.0,212.6 613.0,212.7 615.0,212.8 617.0,210.4 619.0,209.0 621.0,207.0 622.5,206.8 623.0,206.3 625.0,207.3 627.0,208.2 628.8,208.3 629.0,209.2 631.0,210.7 633.0,212.1 634.4,212.0 635.0,212.0 637.0,211.9 639.0,211.7 641.0,210.8 641.2,211.6 643.0,210.2 645.0,207.8 647.0,206.9 648.1,205.2 649.0,205.5 651.0,207.4 652.5,207.3 653.0,207.6 655.0,209.4 657.0,209.8 659.0,211.7 661.0,212.6 661.2,212.3 663.0,211.9 665.0,210.8 667.0,210.1 669.0,208.9 670.0,208.1 671.0,207.7 673.0,206.0 673.8,205.6 675.0,205.1 677.0,205.9 678.8,207.4 679.0,207.3 681.0,208.5 683.0,209.9 685.0,211.9 686.2,213.0 687.0,212.4 689.0,211.5 691.0,211.7 691.9,211.0 693.0,210.5 695.0,209.2 697.0,208.1 698.8,205.7 699.0,206.0 701.0,207.4 703.0,207.6 703.1,207.3 705.0,208.6 707.0,210.1 709.0,212.1 711.0,213.2 711.2,213.4 713.0,213.1 715.0,212.4 717.0,211.2 717.5,210.9 719.0,210.4 721.0,208.1 723.0,206.6 723.8,205.8 725.0,205.6 727.0,205.9 728.8,206.4 729.0,207.0 731.0,209.1 733.0,209.8 735.0,211.6 736.2,212.0 737.0,211.9 739.0,210.9 741.0,210.2 742.5,209.5 743.0,209.1 745.0,208.6 747.0,206.8 749.0,205.6 749.4,204.4 751.0,205.2 753.0,206.2 753.8,205.7 755.0,207.1 757.0,208.4 759.0,210.4 761.0,212.7 761.2,211.9 763.0,211.2 765.0,210.0 765.6,209.8" fill="none" stroke="#cc000e" stroke-width="1.35"/>
<polyline points="73.0,216.7 75.0,215.9 76.2,214.8 77.0,214.0 79.0,215.0 80.0,215.3 81.0,216.1 82.5,216.1 83.0,217.0 85.0,217.9 87.0,217.9 88.8,219.2 89.0,219.8 91.0,221.3 93.0,223.3 93.1,223.8 95.0,222.1 97.0,219.5 97.5,218.8 99.0,217.9 101.0,216.8 102.5,216.0 103.0,215.2 105.0,214.5 105.6,214.2 107.0,215.0 109.0,215.8 110.0,215.2 111.0,216.8 113.0,217.7 113.8,217.8 115.0,219.0 117.0,220.5 119.0,221.3 120.0,221.3 121.0,221.6 123.0,220.6 123.8,220.1 125.0,218.8 127.0,216.3 127.5,215.4 129.0,215.2 131.0,214.2 131.2,214.1 133.0,214.9 135.0,214.8 136.2,216.0 137.0,216.6 139.0,216.6 140.0,217.7 141.0,218.5 143.0,221.4 145.0,223.6 147.0,221.8 149.0,219.7 150.0,219.5 151.0,218.3 153.0,217.5 155.0,215.3 157.0,215.5 159.0,215.4 160.0,215.5 161.0,215.9 163.0,216.9 165.0,217.8 167.0,219.0 169.0,220.3 170.0,221.5 171.0,222.4 171.9,223.9 173.0,222.1 175.0,221.1 176.2,219.9 177.0,218.4 179.0,215.8 180.0,215.3 181.0,214.4 183.0,215.2 185.0,214.4 186.2,215.4 187.0,215.9 189.0,216.6 190.0,216.7 191.0,217.1 193.0,218.3 195.0,219.9 197.0,221.2 198.8,223.3 199.0,223.3 201.0,220.7 202.5,219.4 203.0,219.8 205.0,217.2 207.0,215.3 207.5,214.8 209.0,214.9 211.0,214.7 213.0,215.5 213.8,215.0 215.0,216.4 217.0,217.5 217.5,217.5 219.0,218.6 221.0,219.2 222.5,219.9 223.0,219.2 225.0,220.4 227.0,221.2 227.5,221.3 229.0,220.5 231.0,217.2 232.5,215.4 233.0,215.7 235.0,216.1 236.2,215.3 237.0,215.3 239.0,216.9 240.0,217.3 241.0,217.4 243.0,217.1 245.0,218.4 247.0,219.4 249.0,220.8 251.0,221.9 251.2,223.0 253.0,221.3 255.0,219.9 257.0,217.5 257.5,218.0 259.0,216.1 261.0,214.9 261.2,215.0 263.0,215.1 265.0,215.9 267.0,216.3 269.0,217.0 270.0,217.4 271.0,218.1 273.0,218.8 275.0,219.3 277.0,219.9 279.0,221.4 280.0,221.4 281.0,220.0 283.0,218.7 285.0,216.1 286.9,214.6 287.0,215.1 289.0,215.6 291.0,216.2 292.5,216.5 293.0,215.8 295.0,217.3 297.0,216.9 297.5,217.0 299.0,219.2 301.0,220.7 302.5,221.3 303.0,220.6 305.0,220.6 307.0,220.7 307.5,220.8 309.0,219.5 311.0,218.5 313.0,216.4 313.1,216.7 315.0,217.9 317.0,218.0 317.5,219.3 319.0,220.3 321.0,221.9 322.5,222.2 323.0,222.2 325.0,224.0 327.0,224.2 327.5,224.7 328.8,228.7 329.0,227.8 331.0,228.4 333.0,230.1 333.8,230.5 335.0,229.1 337.0,228.2 338.8,226.9 339.0,227.6 341.0,228.6 343.0,229.8 345.0,231.1 347.0,233.1 349.0,234.1 350.0,234.1 351.0,234.6 353.0,235.3 355.0,235.7 356.2,235.8 357.0,237.1 359.0,238.5 360.0,239.1 361.0,238.5 363.0,236.8 365.0,235.0 366.2,234.4 367.0,235.5 369.0,236.5 370.0,237.2 371.0,237.5 373.0,237.3 375.0,237.1 376.2,236.4 377.0,237.4 379.0,237.7 381.0,239.5 382.5,239.9 383.0,239.9 385.0,239.2 387.0,238.1 388.8,237.7 389.0,237.4 391.0,236.8 393.0,236.0 394.4,235.8 395.0,235.9 397.0,237.0 397.5,237.6 399.0,237.1 401.0,237.4 403.0,237.1 405.0,236.9 406.2,236.1 407.0,236.2 409.0,238.7 411.0,239.3 412.5,240.8 413.0,240.7 415.0,238.8 417.0,238.7 417.5,238.3 419.0,238.4 421.0,238.0 422.5,237.2 423.0,238.2 425.0,239.6 426.2,239.8 427.0,239.7 429.0,238.7 431.0,238.2 431.2,237.0 433.0,237.8 435.0,237.3 435.6,237.1 437.0,238.3 439.0,240.3 440.6,242.1 441.0,241.3 443.0,240.8 445.0,239.1 447.0,239.0 448.8,237.9 449.0,237.9 451.0,240.0 453.0,241.0 453.8,241.7 455.0,241.8 457.0,240.4 459.0,239.5 461.0,239.0 462.5,238.0 463.0,238.2 465.0,239.6 467.0,240.4 469.0,241.2 470.0,242.1 471.0,241.0 473.0,239.9 475.0,238.9 477.0,237.3 477.5,237.7 479.0,238.8 481.0,239.6 483.0,241.4 483.8,241.3 485.0,240.9 487.0,240.4 489.0,239.6 491.0,238.7 491.9,238.1 493.0,239.1 495.0,239.7 497.0,241.3 498.1,241.3 499.0,241.1 501.0,240.3 503.0,238.8 505.0,237.9 505.6,238.0 507.0,238.2 509.0,239.7 511.0,241.3 512.5,242.5 513.0,242.2 515.0,240.3 517.0,239.1 519.0,238.7 520.0,237.2 521.0,238.6 523.0,240.4 525.0,241.8 526.2,242.4 527.0,241.4 529.0,240.8 531.0,239.5 533.0,237.4 533.8,237.0 535.0,237.5 537.0,239.0 539.0,241.2 541.0,241.9 541.2,242.6 543.0,241.9 545.0,240.4 547.0,238.8 548.8,237.0 549.0,237.3 551.0,239.7 553.0,240.4 555.0,242.4 557.0,240.8 559.0,239.2 561.0,238.2 562.5,236.7 563.0,237.2 565.0,237.6 567.0,239.4 569.0,241.1 570.0,241.5 571.0,240.6 573.0,240.1 575.0,238.0 577.0,236.7 577.5,236.8 579.0,238.1 581.0,241.1 582.5,241.9 583.0,241.7 585.0,239.6 587.0,238.0 589.0,236.5 591.0,233.8 591.2,233.5 593.0,233.6 593.1,233.7 595.0,235.1 597.0,238.0 599.0,239.7 600.0,240.0 601.0,239.9 603.0,238.8 605.0,236.6 606.9,235.5 607.0,236.1 609.0,237.3 611.0,239.5 611.9,241.0 613.0,239.6 615.0,238.0 617.0,236.3 619.0,233.6 620.0,233.0 621.0,233.6 623.0,236.5 625.0,238.3 627.0,240.3 627.5,241.8 629.0,239.7 631.0,238.7 633.0,237.1 635.0,235.1 637.0,237.3 639.0,239.4 641.0,240.8 641.2,241.1 643.0,239.6 645.0,237.0 647.0,234.2 648.1,232.8 649.0,233.9 651.0,236.2 653.0,238.4 655.0,240.3 656.2,241.5 657.0,241.0 659.0,240.1 661.0,239.0 663.0,237.2 663.1,237.2 665.0,237.7 667.0,239.9 669.0,240.4 670.0,241.2 671.0,240.5 673.0,238.4 675.0,236.5 677.0,233.7 677.5,233.2 679.0,235.8 681.0,237.6 681.2,236.9 683.0,238.5 685.0,240.2 686.2,240.9 687.0,240.1 689.0,238.7 691.0,236.0 691.2,235.5 693.0,237.2 695.0,238.2 696.9,239.6 697.0,239.5 699.0,238.7 701.0,236.3 703.0,234.7 705.0,234.0 706.2,232.9 707.0,233.5 709.0,235.4 711.0,238.8 713.0,241.4 713.1,240.8 715.0,239.9 717.0,239.4 719.0,238.3 720.0,237.9 721.0,238.4 723.0,239.6 723.8,240.9 725.0,240.1 727.0,238.6 729.0,237.3 731.0,235.7 733.0,234.4 733.8,233.9 735.0,235.2 737.0,237.8 739.0,239.4 741.0,241.0 741.2,241.2 743.0,241.3 745.0,241.0 747.0,239.6 749.0,239.2 750.0,239.3 751.0,240.5 753.0,242.3 753.8,242.9 755.0,241.6 757.0,239.8 759.0,237.4 761.0,235.5 762.5,234.5 763.0,234.6 765.0,237.4 765.6,237.7" fill="none" stroke="#10ccd0" stroke-width="1.25"/>
<polyline points="73.0,323.2 75.0,323.2 77.0,321.5 78.1,320.8 79.0,321.8 81.0,323.9 82.5,325.2 83.0,324.9 85.0,325.8 87.0,326.9 88.8,327.9 89.0,328.2 91.0,329.2 93.0,331.0 93.1,331.4 95.0,328.6 97.0,326.7 98.8,324.4 99.0,323.7 101.0,323.0 103.0,321.1 103.8,321.6 105.0,322.5 107.0,323.7 109.0,324.0 110.0,324.7 111.0,325.3 113.0,326.6 115.0,327.8 117.0,329.1 118.8,331.2 119.0,331.3 121.0,329.3 123.0,327.5 125.0,325.1 126.2,323.5 127.0,323.3 129.0,321.4 130.0,320.7 131.0,321.6 133.0,323.1 135.0,324.8 137.0,325.3 139.0,326.2 140.6,326.9 141.0,327.0 143.0,328.8 145.0,330.3 145.6,331.6 147.0,330.1 149.0,327.8 151.0,325.2 151.2,325.3 153.0,323.2 155.0,321.8 156.2,321.1 157.0,321.3 159.0,323.0 160.0,324.5 161.0,324.9 163.0,326.5 165.0,327.4 167.0,328.4 169.0,328.0 170.0,329.0 171.0,330.2 171.9,330.8 173.0,330.0 175.0,327.2 177.0,325.0 178.8,323.9 179.0,324.0 181.0,322.0 182.5,321.0 183.0,321.1 185.0,322.6 187.0,323.8 189.0,325.3 191.0,327.0 191.9,327.3 193.0,327.4 195.0,328.2 197.0,329.2 198.8,331.0 199.0,331.5 201.0,328.7 203.0,327.1 205.0,325.6 207.0,323.5 208.8,321.5 209.0,321.5 211.0,322.8 212.5,323.9 213.0,324.2 215.0,325.3 217.0,327.4 218.8,328.3 219.0,327.6 220.0,327.5 221.0,327.6 223.0,329.5 223.8,331.0 225.0,330.2 227.0,327.8 229.0,326.4 231.0,324.1 233.0,323.0 235.0,320.8 237.0,322.8 238.8,323.4 239.0,323.6 241.0,325.8 243.0,327.0 243.8,327.9 245.0,327.9 247.0,327.0 247.5,327.3 249.0,328.1 250.6,329.4 251.0,329.8 253.0,327.6 255.0,326.3 257.0,324.5 259.0,323.9 261.0,322.2 261.2,321.5 263.0,322.8 265.0,324.8 267.0,325.9 269.0,326.3 270.0,327.8 271.0,327.4 273.0,328.5 275.0,328.8 275.6,329.8 277.0,329.1 279.0,327.6 281.0,327.5 281.3,327.1 283.0,325.9 285.0,323.8 287.0,322.3 287.5,323.0 289.0,322.5 291.0,323.9 292.5,324.2 293.0,324.4 295.0,327.0 297.0,327.1 299.0,328.8 301.0,328.5 301.9,329.2 303.0,328.7 305.0,327.9 307.0,327.1 307.5,326.4 309.0,326.3 311.0,325.4 311.3,325.6 313.0,324.6 314.4,323.8 315.0,324.9 317.0,326.2 317.5,326.4 319.0,328.2 321.0,330.3 322.5,331.5 323.0,331.3 325.0,333.4 327.0,335.5 328.8,337.4 329.0,336.8 331.0,336.1 331.3,335.7 333.0,336.1 335.0,336.5 337.0,336.2 338.1,337.2 339.0,337.6 341.0,338.3 341.3,338.5 343.0,339.5 345.0,341.9 347.0,343.9 348.8,346.1 349.0,345.8 351.0,346.8 353.0,347.4 355.0,347.0 357.0,348.3 359.0,348.6 359.4,349.0 361.0,348.5 363.0,347.2 365.0,346.4 365.6,346.8 367.0,347.0 369.0,348.9 370.0,349.8 371.0,349.8 373.0,350.4 375.0,350.1 377.0,350.3 377.5,350.4 379.0,349.9 381.0,349.2 381.3,349.0 383.0,348.6 385.0,348.6 386.3,348.5 387.0,348.2 389.0,348.3 391.0,347.3 392.5,347.4 393.0,347.8 395.0,348.8 397.0,350.7 397.5,351.8 399.0,350.5 401.0,350.8 402.5,349.9 403.0,349.8 405.0,348.4 407.0,347.3 408.0,347.3 409.0,347.1 410.6,348.0 411.0,347.9 413.0,350.7 415.0,349.2 416.3,348.4 417.0,348.9 419.0,350.2 420.0,350.7 421.0,351.1 423.0,351.0 425.0,351.7 427.0,352.0 428.8,351.6 429.0,351.2 431.0,350.3 433.0,349.1 435.0,347.1 437.0,348.4 438.8,351.0 439.0,350.2 441.0,351.1 442.5,352.0 443.0,352.0 445.0,351.9 447.0,351.6 449.0,351.7 450.0,351.3 451.0,352.2 453.0,353.9 453.8,354.0 455.0,353.6 457.0,351.1 459.0,349.5 460.6,348.1 461.0,348.1 463.0,348.9 465.0,349.8 467.0,351.5 469.0,353.8 470.0,354.6 471.0,354.5 473.0,353.4 475.0,351.5 477.0,351.3 478.1,350.6 479.0,351.4 481.0,351.9 481.9,353.6 483.0,352.9 485.0,350.9 486.3,350.5 487.0,350.3 489.0,350.2 491.0,349.5 491.9,349.9 493.0,350.9 495.0,353.5 497.0,355.1 498.1,355.7 499.0,356.0 501.0,353.3 503.0,351.4 505.0,350.4 505.6,349.4 507.0,350.7 509.0,350.7 511.0,352.2 513.0,353.6 513.1,353.3 515.0,351.6 517.0,351.0 517.5,349.8 519.0,351.4 521.0,352.4 523.0,353.3 525.0,355.5 527.0,353.6 529.0,351.9 531.0,351.0 533.0,348.7 535.0,347.8 535.6,346.7 537.0,348.9 538.8,350.6 539.0,350.2 541.0,352.0 543.0,353.7 543.8,353.4 545.0,353.6 547.0,351.8 549.0,351.2 550.0,351.0 551.0,351.9 553.0,353.5 555.0,354.5 557.0,353.0 559.0,350.7 561.0,348.2 562.5,347.1 563.0,346.9 565.0,348.6 566.3,348.7 567.0,350.1 569.0,353.8 570.0,354.9 571.0,354.7 573.0,353.2 575.0,352.1 577.0,351.5 578.1,350.6 579.0,350.4 581.0,352.0 582.5,352.0 583.0,351.4 585.0,349.5 587.0,347.3 589.0,346.4 590.6,343.9 591.0,344.6 593.0,347.0 595.0,349.3 597.0,351.6 598.8,353.0 599.0,352.4 601.0,351.2 603.0,349.9 605.0,347.9 606.9,346.9 607.0,347.0 609.0,347.1 611.0,348.6 612.5,348.8 613.0,349.1 615.0,348.1 617.0,346.5 618.8,345.7 619.0,345.7 621.0,348.7 623.0,350.8 623.8,351.7 625.0,351.3 627.0,352.8 628.1,353.5 629.0,352.5 631.0,350.2 633.0,348.3 635.0,345.2 637.0,347.2 639.0,349.9 640.0,350.9 641.0,349.7 643.0,349.2 645.0,348.9 647.0,348.1 647.5,347.9 649.0,348.2 651.0,349.4 653.0,350.3 655.0,352.0 655.6,352.2 657.0,350.4 659.0,349.6 661.0,347.7 661.9,347.6 663.0,347.6 665.0,348.8 667.0,350.7 669.0,352.3 670.0,352.0 671.0,352.1 672.5,353.2 673.0,352.3 675.0,350.5 677.0,348.3 678.1,347.8 679.0,348.7 681.0,350.5 681.3,351.0 683.0,349.8 685.0,349.6 687.0,349.9 687.5,349.1 689.0,347.8 691.0,346.5 691.3,345.9 693.0,348.9 695.0,351.0 696.9,352.4 697.0,352.2 699.0,351.1 701.0,349.8 703.0,347.7 705.0,346.8 707.0,345.0 707.5,344.7 709.0,345.8 711.0,347.4 713.0,349.2 714.4,350.7 715.0,349.8 717.0,349.0 718.8,348.6 719.0,349.2 721.0,350.3 723.0,352.4 724.4,354.4 725.0,353.7 727.0,353.8 728.8,352.2 729.0,352.2 731.0,350.0 733.0,347.0 734.4,345.3 735.0,346.3 737.0,347.4 739.0,349.0 741.0,350.0 741.9,351.3 743.0,351.7 745.0,352.5 747.0,353.1 749.0,354.7 751.0,355.5 752.5,355.6 753.0,354.7 755.0,352.9 757.0,351.0 759.0,348.2 761.0,346.8 761.9,345.3 763.0,346.5 765.0,347.9 765.6,348.4" fill="none" stroke="#dcd200" stroke-width="1.25"/>
<line x1="352" y1="87" x2="327.5" y2="102.4" stroke="#f4f4f4" stroke-width="1.7"/>
<polygon points="325,104 332.8,94.2 330.5,100.5 337.2,101.2" fill="#f4f4f4" stroke="#f4f4f4" stroke-width="0.8" stroke-linejoin="miter"/>
<line x1="287" y1="118.5" x2="307.9" y2="131.0" stroke="#f4f4f4" stroke-width="1.7"/>
<polygon points="310.5,132.5 298.2,130.0 304.9,129.2 302.5,122.9" fill="#f4f4f4" stroke="#f4f4f4" stroke-width="0.8" stroke-linejoin="miter"/>
<line x1="285.5" y1="187.5" x2="325.4" y2="211.5" stroke="#f4f4f4" stroke-width="1.7"/>
<polygon points="328,213 315.8,210.5 322.4,209.7 320.0,203.4" fill="#f4f4f4" stroke="#f4f4f4" stroke-width="0.8" stroke-linejoin="miter"/>
<line x1="285.5" y1="248.5" x2="320.4" y2="229.0" stroke="#f4f4f4" stroke-width="1.7"/>
<polygon points="323,227.5 314.8,236.9 317.3,230.7 310.7,229.6" fill="#f4f4f4" stroke="#f4f4f4" stroke-width="0.8" stroke-linejoin="miter"/>
<line x1="382" y1="306.5" x2="323.9" y2="324.1" stroke="#f4f4f4" stroke-width="1.7"/>
<polygon points="321,325 331.1,317.6 327.2,323.1 333.5,325.6" fill="#f4f4f4" stroke="#f4f4f4" stroke-width="0.8" stroke-linejoin="miter"/>
<text x="374" y="61" fill="#e8e8e8" font-size="12" textLength="39" lengthAdjust="spacingAndGlyphs">2010-9-8</text>
<text x="413.5" y="61" fill="#e8e8e8" font-size="12" textLength="48.5" lengthAdjust="spacing">历史数据</text>
</svg>
<div class="a ann" style="left:352px;top:80px">朝六联压力下降了<span class="m">0.025MPa</span></div>
<div class="a ann" style="left:135px;top:111.5px">朝一联压力下降了<span class="m">0.006MPa</span></div>
<div class="a ann" style="left:135px;top:179.5px">朝六联流量上升了<span class="m">0.93m³/h</span></div>
<div class="a ann" style="left:135px;top:240px">朝六联流量下降了<span class="m">2.63m³/h</span></div>
<div class="a ann" style="left:380px;top:298px">瞬时输差下降至<span class="m">-3.56m³/h</span></div>
<div class="a spin" style="left:42px"><span class="v" style="color:#ff2020">4</span><svg width="8" height="11"><path d="M0.8 3.6 L3.6 1.2 L6.4 3.6 M0.8 7.2 L3.6 9.8 L6.4 7.2" stroke="#6a7aa0" stroke-width="1.4" fill="none"/></svg></div>
<div class="a spin" style="left:83px"><span class="v" style="color:#20c8d0">3</span><svg width="8" height="11"><path d="M0.8 3.6 L3.6 1.2 L6.4 3.6 M0.8 7.2 L3.6 9.8 L6.4 7.2" stroke="#6a7aa0" stroke-width="1.4" fill="none"/></svg></div>
<div class="a spin" style="left:123px;background:#363636"><div class="a" style="left:14.5px;top:1.5px;width:1.2px;height:12px;background:#c8c8c8"></div><span class="v" style="color:#ff2020;right:14.5px">3</span><div class="a" style="left:23.5px;top:0px;width:12px;height:14px;background:linear-gradient(90deg,#ffffff 0,#ffffff 1px,#c4d0f4 1px,#d4def8)"></div><svg width="8" height="11"><path d="M0.8 3.6 L3.6 1.2 L6.4 3.6 M0.8 7.2 L3.6 9.8 L6.4 7.2" stroke="#44547a" stroke-width="1.5" fill="none"/></svg></div>
<div class="a spin" style="left:164px"><span class="v" style="color:#20c8d0">3</span><svg width="8" height="11"><path d="M0.8 3.6 L3.6 1.2 L6.4 3.6 M0.8 7.2 L3.6 9.8 L6.4 7.2" stroke="#6a7aa0" stroke-width="1.4" fill="none"/></svg></div>
<div class="a spin" style="left:205px"><span class="v" style="color:#f0e020">1</span><svg width="8" height="11"><path d="M0.8 3.6 L3.6 1.2 L6.4 3.6 M0.8 7.2 L3.6 9.8 L6.4 7.2" stroke="#6a7aa0" stroke-width="1.4" fill="none"/></svg></div>

<!-- scrollbar -->
<div class="a" style="left:38px;top:398px;width:762px;height:23px;background:linear-gradient(#f4f2ea,#fdfdfa 30%,#fbfaf5 70%,#f0ede3)"></div>
<div class="a" style="left:39px;top:398.5px;width:19px;height:22px;border:1px solid #56789a;box-shadow:inset 0 0 0 0.6px #8aa2bc;border-radius:3px;background:linear-gradient(#fdfdfb,#eeeadc)"><svg class="a" style="left:3px;top:4px" width="12" height="12"><rect x="0.5" y="1" width="3" height="9.5" fill="#1454c8"/><path d="M10.5 0.8 V10.7 L4 5.75Z" fill="#1454c8"/></svg></div>
<div class="a" style="left:59px;top:399px;width:11px;height:20px;border-radius:2px;background:linear-gradient(90deg,#c4d4f8,#b8c8f0)"><svg class="a" style="left:2px;top:6px" width="7" height="8"><path d="M5.5 0.5 L2 4 L5.5 7.5" stroke="#4a5a80" stroke-width="1.6" fill="none"/></svg></div>
<div class="a" style="left:559px;top:399px;width:12px;height:20px;border-radius:2px;background:linear-gradient(90deg,#c8d6fa,#b8cbf4);border-right:1px solid #a6b8e6"><div class="a" style="left:3px;top:8px;width:5px;height:4px;border:1px solid #d8e2fc"></div></div>
<div class="a" style="left:767px;top:399px;width:11px;height:20px;border-radius:2px;background:linear-gradient(90deg,#c4d4f8,#b8c8f0)"><svg class="a" style="left:3px;top:6px" width="7" height="8"><path d="M1.5 0.5 L5 4 L1.5 7.5" stroke="#4a5a80" stroke-width="1.6" fill="none"/></svg></div>
<div class="a" style="left:780px;top:398.5px;width:19px;height:22px;border:1px solid #56789a;box-shadow:inset 0 0 0 0.6px #8aa2bc;border-radius:3px;background:linear-gradient(#fdfdfb,#eeeadc)"><svg class="a" style="left:4px;top:4px" width="12" height="12"><rect x="8" y="1" width="3" height="9.5" fill="#1454c8"/><path d="M0.8 0.8 V10.7 L7.3 5.75Z" fill="#1454c8"/></svg></div>
<div class="a" style="left:0;top:421px;width:800px;height:1px;background:#d6d2c2"></div>

<!-- calendar -->
<div class="a cal"></div>
<div class="a" style="left:23px;top:423px;width:208px;height:23px;background:#0a52e4"></div>
<div class="a" style="left:27px;top:428px;width:17px;height:13px;border:1px solid #e6eefc;border-radius:2px;background:linear-gradient(#dbe6fc,#b4c8f4)"><svg class="a" style="left:4px;top:2px" width="7" height="8"><path d="M5 0.5 L1.8 4 L5 7.5" stroke="#334466" stroke-width="1.6" fill="none"/></svg></div>
<div class="a" style="left:210px;top:428px;width:17px;height:13px;border:1px solid #e6eefc;border-radius:2px;background:linear-gradient(#dbe6fc,#b4c8f4)"><svg class="a" style="left:5px;top:2px" width="7" height="8"><path d="M1.5 0.5 L4.8 4 L1.5 7.5" stroke="#334466" stroke-width="1.6" fill="none"/></svg></div>
<div class="a" style="left:23px;top:427px;width:208px;text-align:center;color:#fff;font-weight:bold;font-size:10px;line-height:14px;letter-spacing:-0.1px">2010年9月</div>
<div class="a wd" style="left:23.0px">星期日</div>
<div class="a wd" style="left:52.7px">星期一</div>
<div class="a wd" style="left:82.4px">星期二</div>
<div class="a wd" style="left:112.1px">星期三</div>
<div class="a wd" style="left:141.8px">星期四</div>
<div class="a wd" style="left:171.5px">星期五</div>
<div class="a wd" style="left:201.2px">星期六</div>
<div class="a" style="left:26px;top:457px;width:203px;height:1px;background:#202020"></div>
<div class="a dt g" style="left:23.0px;top:458.5px;">29</div>
<div class="a dt g" style="left:52.7px;top:458.5px;">30</div>
<div class="a dt g" style="left:82.4px;top:458.5px;">31</div>
<div class="a dt" style="left:112.1px;top:458.5px;">1</div>
<div class="a dt" style="left:141.8px;top:458.5px;">2</div>
<div class="a dt" style="left:171.5px;top:458.5px;">3</div>
<div class="a dt" style="left:201.2px;top:458.5px;">4</div>
<div class="a dt" style="left:23.0px;top:470.3px;">5</div>
<div class="a dt" style="left:52.7px;top:470.3px;">6</div>
<div class="a dt" style="left:82.4px;top:470.3px;">7</div>
<div class="a dt" style="left:141.8px;top:470.3px;">9</div>
<div class="a dt" style="left:171.5px;top:470.3px;">10</div>
<div class="a dt" style="left:201.2px;top:470.3px;">11</div>
<div class="a dt" style="left:23.0px;top:481.9px;">12</div>
<div class="a dt" style="left:52.7px;top:481.9px;">13</div>
<div class="a dt" style="left:82.4px;top:481.9px;">14</div>
<div class="a dt" style="left:112.1px;top:481.9px;">15</div>
<div class="a dt" style="left:141.8px;top:481.9px;">16</div>
<div class="a dt" style="left:171.5px;top:481.9px;">17</div>
<div class="a dt" style="left:201.2px;top:481.9px;">18</div>
<div class="a dt" style="left:23.0px;top:493.7px;">19</div>
<div class="a dt" style="left:52.7px;top:493.7px;">20</div>
<div class="a dt" style="left:82.4px;top:493.7px;">21</div>
<div class="a dt" style="left:112.1px;top:493.7px;">22</div>
<div class="a dt" style="left:141.8px;top:493.7px;">23</div>
<div class="a dt" style="left:171.5px;top:493.7px;">24</div>
<div class="a dt" style="left:201.2px;top:493.7px;">25</div>
<div class="a dt" style="left:23.0px;top:505.3px;">26</div>
<div class="a dt" style="left:52.7px;top:505.3px;">27</div>
<div class="a dt" style="left:82.4px;top:505.3px;">28</div>
<div class="a dt" style="left:112.1px;top:505.3px;">29</div>
<div class="a dt" style="left:141.8px;top:505.3px;">30</div>
<div class="a dt g" style="left:171.5px;top:505.3px;">1</div>
<div class="a dt g" style="left:201.2px;top:505.3px;">2</div>
<div class="a dt g" style="left:23.0px;top:516.9px;">3</div>
<div class="a dt g" style="left:52.7px;top:516.9px;">4</div>
<div class="a dt g" style="left:82.4px;top:516.9px;">5</div>
<div class="a dt g" style="left:112.1px;top:516.9px;">6</div>
<div class="a dt g" style="left:141.8px;top:516.9px;">7</div>
<div class="a dt g" style="left:171.5px;top:516.9px;">8</div>
<div class="a dt g" style="left:201.2px;top:516.9px;">9</div>
<div class="a" style="left:112px;top:470px;width:30px;height:11px;background:#0a52e4"></div>
<div class="a" style="left:171px;top:470px;width:30px;height:11.5px;border:1px solid #e85050"></div>
<div class="a dt" style="left:112.1px;top:470.3px;color:#fff;">8</div>
<div class="a" style="left:26px;top:531px;width:28px;height:10px;border:1px solid #e85050"></div>
<div class="a" style="left:55px;top:529px;font-weight:bold;font-size:10.5px;line-height:13px;white-space:nowrap;letter-spacing:-0.3px">今天: 2010-9-10</div>

<div class="a bb" style="left:33px">曲线预览</div>
<div class="a bb" style="left:102px">曲线查看</div>
<div class="a bb" style="left:171px">事件查看</div>

<!-- table -->
<div class="a" style="left:416px;top:422px;width:382px;height:155px;border:1px solid #7f9db9;background:#ece9d8"></div>
<div class="a" style="left:0;top:577px;width:800px;height:2px;background:#ede6da"></div>
<div class="a tr" style="top:423px;height:16.5px;background:#d9e4f8;border-bottom:1px solid #9fb4e4;border-top:1px solid #9fb4e4;border-left:1px solid #9fb4e4;border-right:1px solid #9fb4e4"><div class="a" style="left:0;width:113px;height:100%;text-align:center;border-right:1px solid #9fb4e4;line-height:14px;font-size:11px">时间</div><div class="a" style="left:113px;right:0;height:100%;text-align:center;line-height:14px;font-size:11px">事件</div></div>
<div class="a tr" style="top:439.5px"><div class="tc1"><span>2010-9-8 17:07:38</span></div><div class="tc2">输差超限</div></div>
<div class="a tr" style="top:456.0px"><div class="tc1"><span>2010-9-8 17:13:36</span></div><div class="tc2">输差恢复</div></div>
<div class="a tr" style="top:472.5px"><div class="tc1"><span>2010-9-8 17:37:49</span></div><div class="tc2">输差超限</div></div>
<div class="a tr" style="top:489.0px"><div class="tc1"><span>2010-9-8 18:30:36</span></div><div class="tc2">输差恢复</div></div>
<div class="a" style="left:785px;top:423px;width:12px;height:154px;background:linear-gradient(90deg,#f3f1ea,#fdfdf9)"></div>
<div class="a" style="left:785px;top:424px;width:11px;height:13px;border-radius:2px;background:linear-gradient(#d2ddf9,#b8caf2)"><svg class="a" style="left:2px;top:3px" width="8" height="7"><path d="M0.5 5.5 L4 2 L7.5 5.5" stroke="#334466" stroke-width="1.6" fill="none"/></svg></div>
<div class="a" style="left:785px;top:492px;width:11px;height:69px;border-radius:2px;background:linear-gradient(90deg,#c8d6fa,#b6c8f2);border:1px solid #a8bbea"><div class="a" style="left:2px;top:31px;width:5px;height:5px;border-top:1px solid #e0e8fc;border-bottom:1px solid #e0e8fc"></div></div>
<div class="a" style="left:785px;top:563px;width:11px;height:13px;border-radius:2px;background:linear-gradient(#d2ddf9,#b8caf2)"><svg class="a" style="left:2px;top:3px" width="8" height="7"><path d="M0.5 1.5 L4 5 L7.5 1.5" stroke="#334466" stroke-width="1.6" fill="none"/></svg></div>

<!-- status -->
<div id="status" class="a"></div>
<div class="a led" style="left:1px"></div><div class="a st" style="left:11px">朝六联</div>
<div class="a sep" style="left:51px"></div>
<div class="a led" style="left:53px"></div><div class="a st" style="left:63px">朝一联</div>
<div class="a sep" style="left:101px"></div>
<div class="a sep" style="left:151px"></div>
<div class="a sep" style="left:201px"></div>
<div class="a sep" style="left:251px"></div>
<div class="a sep" style="left:370px"></div>
<svg class="a" style="left:372px;top:582px" width="14" height="14"><path d="M2 5 H5 L9 1 V13 L5 9 H2Z" fill="#d8e4ff"/><path d="M10 4 Q13 7 10 10" stroke="#202040" fill="none"/><path d="M1 2 L12 12 M12 2 L1 12" stroke="#e02020" stroke-width="1.2"/></svg>
<div class="a sep" style="left:670px"></div>
</body></html>
